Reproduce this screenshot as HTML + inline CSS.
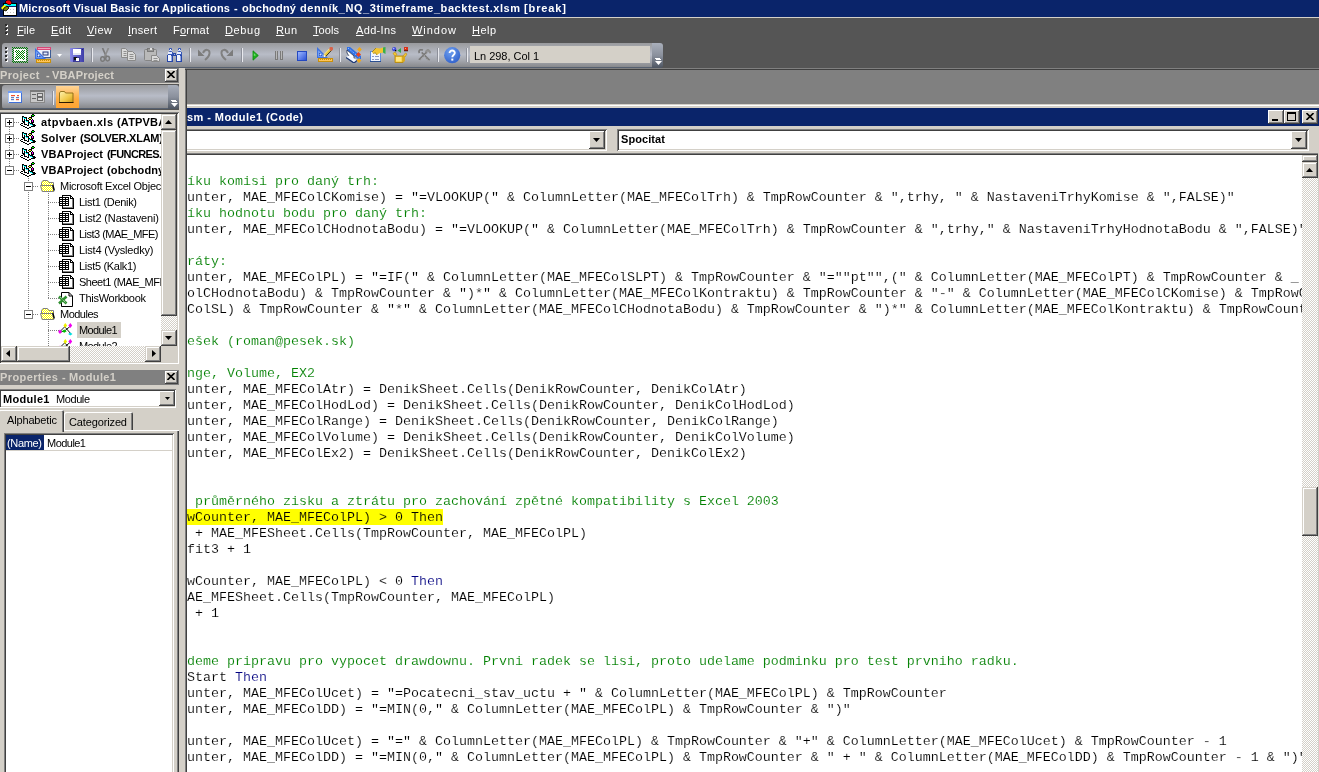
<!DOCTYPE html><html><head><meta charset="utf-8"><title>Microsoft Visual Basic for Applications</title><style>
html,body{margin:0;padding:0}
body{width:1319px;height:772px;overflow:hidden;position:relative;background:#D4D0C8;font:11px/16px 'Liberation Sans',sans-serif;color:#000}
div,span,svg,i,b{position:absolute;box-sizing:border-box}
.t,.code{will-change:transform}
.t{white-space:pre;line-height:16px;height:16px}
u{text-decoration:underline;text-underline-offset:1px}
.btn{background:#D4D0C8;box-shadow:inset -1px -1px #404040,inset 1px 1px #fff,inset -2px -2px #808080,inset 2px 2px #D4D0C8}
.sbtn{background:#D4D0C8;box-shadow:inset -1px -1px #404040,inset 1px 1px #D4D0C8,inset -2px -2px #808080,inset 2px 2px #fff}
.sunk{background:#fff;box-shadow:inset 1px 1px #808080,inset -1px -1px #fff,inset 2px 2px #404040,inset -2px -2px #D4D0C8}
.trk{background:repeating-conic-gradient(#fff 0 25%,#D4D0C8 0 50%) 0 0/2px 2px}
.tb{background:linear-gradient(#999a9d 0%,#b8bcc7 45%,#a4a7ae 70%,#88898c 96%,#566070 97%);border-radius:3px 0 0 3px}
.ov{background:linear-gradient(#a9afbb 0%,#8a909c 50%,#4d5562 100%);border-radius:0 3px 3px 0}
.sep{width:1px;background:#e8e9ee;box-shadow:-1px 0 #8d909a}
.code{font:13.333px/16px 'Liberation Mono',monospace;white-space:pre;left:187px;height:16px;color:#000;-webkit-text-stroke:0.13px #fff}
.hl{-webkit-text-stroke-color:#ff0}
.g{color:#008000;position:static}.k{color:#000080;position:static}
.tr{left:0;height:16px;width:161px}
.dotv{width:1px;background:repeating-linear-gradient(#808080 0 1px,transparent 1px 2px)}
.doth{height:1px;background:repeating-linear-gradient(90deg,#808080 0 1px,transparent 1px 2px)}
.pm{width:9px;height:9px;border:1px solid #808080;background:#fff}
.pm:before{content:'';position:absolute;left:1px;top:3px;width:5px;height:1px;background:#000}
.pl:after{content:'';position:absolute;left:3px;top:1px;width:1px;height:5px;background:#000}
</style></head><body><div style="left:0;top:0;width:1319px;height:17px;background:#0A246A"></div><svg style="left:0px;top:0px" width="18" height="17" viewBox="0 0 18 17" ><rect x="3" y="3" width="14" height="13" fill="#000" /><rect x="4" y="4" width="12" height="2" fill="#00FFFF" /><rect x="4" y="6" width="12" height="1" fill="#0A246A" /><rect x="4" y="7" width="12" height="8" fill="#fff" /><rect x="10" y="9" width="1" height="1" fill="#C0C0C0" /><rect x="13" y="9" width="1" height="1" fill="#C0C0C0" /><rect x="7" y="12" width="1" height="1" fill="#C0C0C0" /><rect x="10" y="12" width="1" height="1" fill="#C0C0C0" /><rect x="13" y="12" width="1" height="1" fill="#C0C0C0" /><polygon points="7,0 10,0 12,3 10,5 7,4 5,2" fill="#FF0000" stroke="#000" stroke-width="0.8"/><polygon points="1,8 4,5 7,6 3,10" fill="#FFFF00"/><polygon points="4,8 7,6 9,8 6,11 3,10" fill="#808000" stroke="#000" stroke-width="0.8"/></svg><span class=t style="left:19px;top:0px;font-weight:bold;color:#fff;letter-spacing:0.196px;">Microsoft Visual Basic for Applications</span><span class=t style="left:234px;top:0px;font-weight:bold;color:#fff;">-</span><span class=t style="left:242px;top:0px;font-weight:bold;color:#fff;letter-spacing:0.205px;">obchodný</span><span class=t style="left:300px;top:0px;font-weight:bold;color:#fff;letter-spacing:0.553px;">denník_NQ_3timeframe_backtest.xlsm</span><span class=t style="left:524px;top:0px;font-weight:bold;color:#fff;letter-spacing:0.885px;">[break]</span><div style="left:0;top:17px;width:1319px;height:1px;background:#D4D0C8"></div><div style="left:0;top:18px;width:1319px;height:50px;background:#555"></div><span class=t style="left:17px;top:22px;color:#fff;letter-spacing:0.089px;"><u>F</u>ile</span><span class=t style="left:51px;top:22px;color:#fff;letter-spacing:0.344px;"><u>E</u>dit</span><span class=t style="left:87px;top:22px;color:#fff;letter-spacing:0.448px;"><u>V</u>iew</span><span class=t style="left:128px;top:22px;color:#fff;letter-spacing:0.297px;"><u>I</u>nsert</span><span class=t style="left:173px;top:22px;color:#fff;letter-spacing:0.231px;">F<u>o</u>rmat</span><span class=t style="left:225px;top:22px;color:#fff;letter-spacing:0.645px;"><u>D</u>ebug</span><span class=t style="left:276px;top:22px;color:#fff;letter-spacing:0.406px;"><u>R</u>un</span><span class=t style="left:313px;top:22px;color:#fff;letter-spacing:0.078px;"><u>T</u>ools</span><span class=t style="left:356px;top:22px;color:#fff;letter-spacing:0.346px;"><u>A</u>dd-Ins</span><span class=t style="left:412px;top:22px;color:#fff;letter-spacing:0.975px;"><u>W</u>indow</span><span class=t style="left:472px;top:22px;color:#fff;letter-spacing:0.458px;"><u>H</u>elp</span><div class=tb style="left:2px;top:43px;width:650px;height:25px"></div><div class=ov style="left:652px;top:43px;width:11px;height:25px"></div><div style="left:470px;top:46px;width:180px;height:17px;background:#D4D0C8"></div><span class=t style="left:474px;top:48px;letter-spacing:-0.036px;">Ln 298, Col 1</span><div class=sep style="left:92px;top:48px;height:14px"></div><div class=sep style="left:190px;top:48px;height:14px"></div><div class=sep style="left:242px;top:48px;height:14px"></div><div class=sep style="left:340px;top:48px;height:14px"></div><div class=sep style="left:438px;top:48px;height:14px"></div><div class=sep style="left:467px;top:48px;height:14px"></div><svg style="left:5px;top:24px" width="3" height="12" viewBox="0 0 3 12" shape-rendering="crispEdges"><rect x="1" y="1" width="2" height="2" fill="#fff" /><rect x="0" y="0" width="2" height="2" fill="#2e2e2e" /><rect x="1" y="5" width="2" height="2" fill="#fff" /><rect x="0" y="4" width="2" height="2" fill="#2e2e2e" /><rect x="1" y="9" width="2" height="2" fill="#fff" /><rect x="0" y="8" width="2" height="2" fill="#2e2e2e" /></svg><svg style="left:5px;top:47px" width="3" height="16" viewBox="0 0 3 16" shape-rendering="crispEdges"><rect x="1" y="1" width="2" height="2" fill="#fff" /><rect x="0" y="0" width="2" height="2" fill="#2e2e2e" /><rect x="1" y="5" width="2" height="2" fill="#fff" /><rect x="0" y="4" width="2" height="2" fill="#2e2e2e" /><rect x="1" y="9" width="2" height="2" fill="#fff" /><rect x="0" y="8" width="2" height="2" fill="#2e2e2e" /><rect x="1" y="13" width="2" height="2" fill="#fff" /><rect x="0" y="12" width="2" height="2" fill="#2e2e2e" /></svg><svg style="left:12px;top:47px" width="16" height="16" viewBox="0 0 16 16" shape-rendering="crispEdges"><rect x="0" y="0" width="1" height="1" fill="#008000"/><rect x="2" y="0" width="1" height="1" fill="#008000"/><rect x="4" y="0" width="1" height="1" fill="#008000"/><rect x="6" y="0" width="1" height="1" fill="#008000"/><rect x="8" y="0" width="1" height="1" fill="#008000"/><rect x="10" y="0" width="1" height="1" fill="#008000"/><rect x="12" y="0" width="1" height="1" fill="#008000"/><rect x="14" y="0" width="1" height="1" fill="#008000"/><rect x="1" y="1" width="1" height="1" fill="#008000"/><rect x="3" y="1" width="1" height="1" fill="#008000"/><rect x="5" y="1" width="1" height="1" fill="#008000"/><rect x="7" y="1" width="1" height="1" fill="#008000"/><rect x="9" y="1" width="1" height="1" fill="#008000"/><rect x="11" y="1" width="1" height="1" fill="#008000"/><rect x="13" y="1" width="1" height="1" fill="#008000"/><rect x="15" y="1" width="1" height="1" fill="#008000"/><rect x="0" y="2" width="1" height="1" fill="#008000"/><rect x="2" y="2" width="12" height="1" fill="#fff"/><rect x="14" y="2" width="1" height="1" fill="#008000"/><rect x="1" y="3" width="1" height="1" fill="#008000"/><rect x="2" y="3" width="2" height="1" fill="#fff"/><rect x="4" y="3" width="1" height="1" fill="#008000"/><rect x="5" y="3" width="1" height="1" fill="#fff"/><rect x="6" y="3" width="1" height="1" fill="#008000"/><rect x="7" y="3" width="3" height="1" fill="#fff"/><rect x="10" y="3" width="1" height="1" fill="#008000"/><rect x="11" y="3" width="1" height="1" fill="#fff"/><rect x="12" y="3" width="1" height="1" fill="#008000"/><rect x="13" y="3" width="1" height="1" fill="#fff"/><rect x="15" y="3" width="1" height="1" fill="#008000"/><rect x="0" y="4" width="1" height="1" fill="#008000"/><rect x="2" y="4" width="1" height="1" fill="#fff"/><rect x="3" y="4" width="1" height="1" fill="#008000"/><rect x="4" y="4" width="1" height="1" fill="#fff"/><rect x="5" y="4" width="1" height="1" fill="#008000"/><rect x="6" y="4" width="1" height="1" fill="#fff"/><rect x="7" y="4" width="1" height="1" fill="#008000"/><rect x="8" y="4" width="1" height="1" fill="#fff"/><rect x="9" y="4" width="1" height="1" fill="#008000"/><rect x="10" y="4" width="1" height="1" fill="#fff"/><rect x="11" y="4" width="1" height="1" fill="#008000"/><rect x="12" y="4" width="2" height="1" fill="#fff"/><rect x="14" y="4" width="1" height="1" fill="#008000"/><rect x="1" y="5" width="1" height="1" fill="#008000"/><rect x="2" y="5" width="2" height="1" fill="#fff"/><rect x="4" y="5" width="1" height="1" fill="#008000"/><rect x="5" y="5" width="1" height="1" fill="#fff"/><rect x="6" y="5" width="1" height="1" fill="#008000"/><rect x="7" y="5" width="1" height="1" fill="#fff"/><rect x="8" y="5" width="1" height="1" fill="#008000"/><rect x="9" y="5" width="1" height="1" fill="#fff"/><rect x="10" y="5" width="1" height="1" fill="#008000"/><rect x="11" y="5" width="1" height="1" fill="#fff"/><rect x="12" y="5" width="1" height="1" fill="#008000"/><rect x="13" y="5" width="1" height="1" fill="#fff"/><rect x="15" y="5" width="1" height="1" fill="#008000"/><rect x="0" y="6" width="1" height="1" fill="#008000"/><rect x="2" y="6" width="3" height="1" fill="#fff"/><rect x="5" y="6" width="1" height="1" fill="#008000"/><rect x="6" y="6" width="1" height="1" fill="#fff"/><rect x="7" y="6" width="1" height="1" fill="#008000"/><rect x="8" y="6" width="1" height="1" fill="#fff"/><rect x="9" y="6" width="1" height="1" fill="#008000"/><rect x="10" y="6" width="1" height="1" fill="#fff"/><rect x="11" y="6" width="1" height="1" fill="#008000"/><rect x="12" y="6" width="2" height="1" fill="#fff"/><rect x="14" y="6" width="1" height="1" fill="#008000"/><rect x="1" y="7" width="1" height="1" fill="#008000"/><rect x="2" y="7" width="2" height="1" fill="#fff"/><rect x="4" y="7" width="1" height="1" fill="#008000"/><rect x="5" y="7" width="1" height="1" fill="#fff"/><rect x="6" y="7" width="1" height="1" fill="#008000"/><rect x="7" y="7" width="1" height="1" fill="#fff"/><rect x="8" y="7" width="1" height="1" fill="#008000"/><rect x="9" y="7" width="1" height="1" fill="#fff"/><rect x="10" y="7" width="1" height="1" fill="#008000"/><rect x="11" y="7" width="3" height="1" fill="#fff"/><rect x="15" y="7" width="1" height="1" fill="#008000"/><rect x="0" y="8" width="1" height="1" fill="#008000"/><rect x="2" y="8" width="3" height="1" fill="#fff"/><rect x="5" y="8" width="1" height="1" fill="#008000"/><rect x="6" y="8" width="1" height="1" fill="#fff"/><rect x="7" y="8" width="1" height="1" fill="#008000"/><rect x="8" y="8" width="1" height="1" fill="#fff"/><rect x="9" y="8" width="1" height="1" fill="#008000"/><rect x="10" y="8" width="1" height="1" fill="#fff"/><rect x="11" y="8" width="1" height="1" fill="#008000"/><rect x="12" y="8" width="2" height="1" fill="#fff"/><rect x="14" y="8" width="1" height="1" fill="#008000"/><rect x="1" y="9" width="1" height="1" fill="#008000"/><rect x="2" y="9" width="2" height="1" fill="#fff"/><rect x="4" y="9" width="1" height="1" fill="#008000"/><rect x="5" y="9" width="1" height="1" fill="#fff"/><rect x="6" y="9" width="1" height="1" fill="#008000"/><rect x="7" y="9" width="1" height="1" fill="#fff"/><rect x="8" y="9" width="1" height="1" fill="#008000"/><rect x="9" y="9" width="1" height="1" fill="#fff"/><rect x="10" y="9" width="1" height="1" fill="#008000"/><rect x="11" y="9" width="1" height="1" fill="#fff"/><rect x="12" y="9" width="1" height="1" fill="#008000"/><rect x="13" y="9" width="1" height="1" fill="#fff"/><rect x="15" y="9" width="1" height="1" fill="#008000"/><rect x="0" y="10" width="1" height="1" fill="#008000"/><rect x="2" y="10" width="1" height="1" fill="#fff"/><rect x="3" y="10" width="1" height="1" fill="#008000"/><rect x="4" y="10" width="1" height="1" fill="#fff"/><rect x="5" y="10" width="1" height="1" fill="#008000"/><rect x="6" y="10" width="1" height="1" fill="#fff"/><rect x="7" y="10" width="1" height="1" fill="#008000"/><rect x="8" y="10" width="1" height="1" fill="#fff"/><rect x="9" y="10" width="1" height="1" fill="#008000"/><rect x="10" y="10" width="1" height="1" fill="#fff"/><rect x="11" y="10" width="1" height="1" fill="#008000"/><rect x="12" y="10" width="2" height="1" fill="#fff"/><rect x="14" y="10" width="1" height="1" fill="#008000"/><rect x="1" y="11" width="1" height="1" fill="#008000"/><rect x="2" y="11" width="2" height="1" fill="#fff"/><rect x="4" y="11" width="1" height="1" fill="#008000"/><rect x="5" y="11" width="1" height="1" fill="#fff"/><rect x="6" y="11" width="1" height="1" fill="#008000"/><rect x="7" y="11" width="1" height="1" fill="#fff"/><rect x="8" y="11" width="1" height="1" fill="#008000"/><rect x="9" y="11" width="1" height="1" fill="#fff"/><rect x="10" y="11" width="1" height="1" fill="#008000"/><rect x="11" y="11" width="1" height="1" fill="#fff"/><rect x="12" y="11" width="1" height="1" fill="#008000"/><rect x="13" y="11" width="1" height="1" fill="#fff"/><rect x="15" y="11" width="1" height="1" fill="#008000"/><rect x="0" y="12" width="1" height="1" fill="#008000"/><rect x="2" y="12" width="1" height="1" fill="#fff"/><rect x="3" y="12" width="1" height="1" fill="#008000"/><rect x="4" y="12" width="1" height="1" fill="#fff"/><rect x="5" y="12" width="1" height="1" fill="#008000"/><rect x="6" y="12" width="5" height="1" fill="#fff"/><rect x="11" y="12" width="1" height="1" fill="#008000"/><rect x="12" y="12" width="2" height="1" fill="#fff"/><rect x="14" y="12" width="1" height="1" fill="#008000"/><rect x="1" y="13" width="1" height="1" fill="#008000"/><rect x="2" y="13" width="12" height="1" fill="#fff"/><rect x="15" y="13" width="1" height="1" fill="#008000"/><rect x="0" y="14" width="1" height="1" fill="#008000"/><rect x="2" y="14" width="1" height="1" fill="#008000"/><rect x="4" y="14" width="1" height="1" fill="#008000"/><rect x="6" y="14" width="1" height="1" fill="#008000"/><rect x="8" y="14" width="1" height="1" fill="#008000"/><rect x="10" y="14" width="1" height="1" fill="#008000"/><rect x="12" y="14" width="1" height="1" fill="#008000"/><rect x="14" y="14" width="1" height="1" fill="#008000"/><rect x="1" y="15" width="1" height="1" fill="#008000"/><rect x="3" y="15" width="1" height="1" fill="#008000"/><rect x="5" y="15" width="1" height="1" fill="#008000"/><rect x="7" y="15" width="1" height="1" fill="#008000"/><rect x="9" y="15" width="1" height="1" fill="#008000"/><rect x="11" y="15" width="1" height="1" fill="#008000"/><rect x="13" y="15" width="1" height="1" fill="#008000"/><rect x="15" y="15" width="1" height="1" fill="#008000"/></svg><svg style="left:35px;top:47px" width="16" height="16" viewBox="0 0 16 16" ><rect x="2" y="0" width="14" height="3" fill="#D64877" /><rect x="3" y="1" width="12" height="1" fill="#F2A0BC" /><rect x="2" y="3" width="14" height="8" fill="#EEF3FD" /><rect x="15" y="3" width="1" height="8" fill="#3D5C94" /><rect x="2" y="10" width="14" height="1" fill="#3D5C94" /><rect x="8" y="5" width="5" height="3" fill="#E6ECFA" stroke="#26397A" stroke-width="1"/><polygon points="0,1 0,12 11,12" fill="#3F73E0"/><polygon points="1.2,4 1.2,10.8 8,10.8" fill="#7FA8F5"/><polygon points="2,6 2,10 6,10" fill="#2750C0"/><circle cx="3.5" cy="8.5" r="0.9" fill="#fff"/><rect x="1" y="12" width="15" height="4" fill="#C8900C" /><rect x="2" y="13" width="13" height="2" fill="#FFC55A" /><rect x="3" y="13" width="1" height="1" fill="#C8900C" /><rect x="5" y="13" width="1" height="1" fill="#C8900C" /><rect x="7" y="13" width="1" height="1" fill="#C8900C" /><rect x="9" y="13" width="1" height="1" fill="#C8900C" /><rect x="11" y="13" width="1" height="1" fill="#C8900C" /><rect x="13" y="13" width="1" height="1" fill="#C8900C" /></svg><svg style="left:57px;top:54px" width="5" height="3" viewBox="0 0 5 3" ><polygon points="0,0 5,0 2.5,3" fill="#fff"/></svg><svg style="left:70px;top:48px" width="14" height="14" viewBox="0 0 14 14" ><defs><linearGradient id="sv" x1="0" x2="1"><stop offset="0" stop-color="#8A8AE8"/><stop offset="1" stop-color="#3C3CA8"/></linearGradient></defs><path d="M0,0 H14 V14 H1 L0,13 Z" fill="url(#sv)"/><rect x="3" y="1" width="8" height="6" fill="#fff" /><rect x="3" y="5" width="8" height="2" fill="#E4E8F4" /><rect x="12" y="1" width="1" height="1" fill="#222266" /><rect x="3" y="9" width="7" height="5" fill="#3A3A98" /><rect x="4" y="9" width="3" height="3" fill="#111" /><rect x="6" y="10" width="3" height="3" fill="#fff" /><rect x="4" y="10" width="2" height="2" fill="#111" /></svg><svg style="left:100px;top:48px" width="11" height="14" viewBox="0 0 11 14" ><g fill="none" stroke="#7a7a7a"><path d="M2.5,0 L6.5,9" stroke-width="1.7"/><path d="M8.5,0 L4.5,9" stroke-width="1.7" stroke="#8c8c8c"/><ellipse cx="2.6" cy="11" rx="1.9" ry="2.3" stroke-width="1.5"/><ellipse cx="7.6" cy="10.6" rx="1.9" ry="2.3" stroke-width="1.5"/></g></svg><svg style="left:121px;top:48px" width="16" height="14" viewBox="0 0 16 14" ><path d="M0.5,0.5 H4.5 L7.5,3.5 V9.5 H0.5 Z" fill="#DADADA" stroke="#8a8a8a" stroke-width="1"/><rect x="2.5" y="3.0" width="3" height="1" fill="#8f8f8f" /><rect x="2.5" y="5.0" width="3" height="1" fill="#8f8f8f" /><rect x="2.5" y="7.0" width="3" height="1" fill="#8f8f8f" /><path d="M6.5,3.5 H11.5 L14.5,6.5 V12.5 H6.5 Z" fill="#DADADA" stroke="#8a8a8a" stroke-width="1"/><rect x="8.5" y="6.0" width="4" height="1" fill="#8f8f8f" /><rect x="8.5" y="8.0" width="4" height="1" fill="#8f8f8f" /><rect x="8.5" y="10.0" width="4" height="1" fill="#8f8f8f" /></svg><svg style="left:144px;top:48px" width="17" height="15" viewBox="0 0 17 15" ><rect x="0.5" y="1.5" width="12" height="11" fill="#B9B9B9" stroke="#858585" stroke-width="1" rx="1"/><rect x="3.5" y="0.5" width="6" height="3" fill="#9a9a9a" stroke="#7a7a7a" stroke-width="1"/><rect x="6" y="0" width="2" height="2" fill="#e0e0e0" /><path d="M7.5,7.5 H12.5 L15.5,10.5 V13.5 H7.5 Z" fill="#DADADA" stroke="#8a8a8a" stroke-width="1"/><rect x="9.5" y="10.0" width="4" height="1" fill="#8f8f8f" /><rect x="9.5" y="12.0" width="4" height="1" fill="#8f8f8f" /></svg><svg style="left:167px;top:48px" width="15" height="14" viewBox="0 0 15 14" ><rect x="2" y="0" width="3" height="4" fill="#3557B8" rx="1"/><rect x="3" y="1" width="1" height="1" fill="#fff" /><rect x="2" y="2" width="3" height="1" fill="#C8D4F8" /><rect x="1" y="4" width="5" height="3" fill="#3557B8" /><rect x="1" y="4" width="4" height="2" fill="#E4EBFF" /><rect x="0" y="7" width="6" height="7" fill="#2747A8" /><rect x="1" y="7" width="3" height="6" fill="#F0F4FF" /><rect x="4" y="8" width="1" height="5" fill="#8FA6E8" /><rect x="11" y="0" width="3" height="4" fill="#3557B8" rx="1"/><rect x="12" y="1" width="1" height="1" fill="#fff" /><rect x="11" y="2" width="3" height="1" fill="#C8D4F8" /><rect x="10" y="4" width="5" height="3" fill="#3557B8" /><rect x="10" y="4" width="4" height="2" fill="#E4EBFF" /><rect x="9" y="7" width="6" height="7" fill="#2747A8" /><rect x="10" y="7" width="3" height="6" fill="#F0F4FF" /><rect x="13" y="8" width="1" height="5" fill="#8FA6E8" /><rect x="6" y="5" width="3" height="3" fill="#2747A8" /><rect x="7" y="6" width="1" height="1" fill="#9FB4F0" /></svg><svg style="left:198px;top:48px" width="13" height="13" viewBox="0 0 13 13" ><g ><polygon points="0,1.5 0,8 6.5,8" fill="#7c7c7c"/><path d="M5,5 C7,0.5 12,1 11.5,5.5 C11.2,8.5 9,10.5 7,12" fill="none" stroke="#808080" stroke-width="2"/></g></svg><svg style="left:220px;top:48px" width="13" height="13" viewBox="0 0 13 13" ><g transform="translate(13,0) scale(-1,1)"><polygon points="0,1.5 0,8 6.5,8" fill="#7c7c7c"/><path d="M5,5 C7,0.5 12,1 11.5,5.5 C11.2,8.5 9,10.5 7,12" fill="none" stroke="#808080" stroke-width="2"/></g></svg><svg style="left:252px;top:50px" width="7" height="11" viewBox="0 0 7 11" ><polygon points="1,0.8 1,10.2 6.3,5.5" fill="#1DB01D" stroke="#0B8A0B" stroke-width="0.8"/><polygon points="1.8,3 1.8,6 4,5.2" fill="#6FE06F"/></svg><svg style="left:275px;top:51px" width="8" height="9" viewBox="0 0 8 9" ><rect x="0" y="0" width="3" height="9" fill="#7a7a7a" /><rect x="1" y="0" width="1" height="8" fill="#b8b8b8" /><rect x="5" y="0" width="3" height="9" fill="#7a7a7a" /><rect x="6" y="0" width="1" height="8" fill="#b8b8b8" /></svg><svg style="left:297px;top:51px" width="10" height="10" viewBox="0 0 10 10" ><defs><linearGradient id="st" x1="0" y1="0" x2="1" y2="1"><stop offset="0" stop-color="#9DB7FF"/><stop offset="1" stop-color="#2C52D8"/></linearGradient></defs><rect x="0" y="0" width="10" height="10" fill="#2448C0" /><rect x="1" y="1" width="8" height="8" fill="url(#st)" /></svg><svg style="left:317px;top:47px" width="16" height="16" viewBox="0 0 16 16" ><polygon points="0,0 0,11 11,11" fill="#3F73E0"/><polygon points="1.2,3.2 1.2,9.8 7.8,9.8" fill="#7FA8F5"/><polygon points="2,5.5 2,9 5.5,9" fill="#2750C0"/><circle cx="3.3" cy="7.8" r="0.8" fill="#fff"/><path d="M14,2 L7.5,9" stroke="#E8C840" stroke-width="3"/><path d="M14.6,3.2 L8.6,9.6" stroke="#222" stroke-width="0.9"/><path d="M13,1.2 L7,7.6" stroke="#FFF0A0" stroke-width="0.8"/><circle cx="14.2" cy="1.8" r="1.9" fill="#D8634A"/><polygon points="6,10.5 7,7.8 8.8,9.6" fill="#fff"/><polygon points="6,10.5 6.5,9.4 7.2,10" fill="#000"/><rect x="1" y="11" width="15" height="4" fill="#C8900C" /><rect x="2" y="12" width="13" height="2" fill="#FFC55A" /><rect x="3" y="12" width="1" height="1" fill="#C8900C" /><rect x="5" y="12" width="1" height="1" fill="#C8900C" /><rect x="7" y="12" width="1" height="1" fill="#C8900C" /><rect x="9" y="12" width="1" height="1" fill="#C8900C" /><rect x="11" y="12" width="1" height="1" fill="#C8900C" /><rect x="13" y="12" width="1" height="1" fill="#C8900C" /></svg><svg style="left:346px;top:47px" width="16" height="16" viewBox="0 0 16 16" ><polygon points="1,0 4,0 15,9 15,12 12,12 1,3" fill="#2F6FE4"/><path d="M2,1 L14,11" stroke="#9CC4FF" stroke-width="1" stroke-dasharray="1.5,1.5"/><polygon points="1,3 8,9 8,12 5,12 1,6" fill="#fff" stroke="#1c2c50" stroke-width="0.8"/><polygon points="0,10 3,8.5 11,13 8,15.5" fill="#F4F8FF"/><path d="M0,10.5 L8,16 L11,13.5" fill="none" stroke="#1E3A78" stroke-width="1.3"/><polygon points="13.5,0 15.8,2.5 13.5,5 11.2,2.5" fill="#F0A818"/><polygon points="12.5,5 15,7.5 12.5,10 10,7.5" fill="#E8421C"/><polygon points="13,11 15.3,13.5 13,16 10.7,13.5" fill="#F0A818"/></svg><svg style="left:370px;top:47px" width="16" height="16" viewBox="0 0 16 16" ><rect x="0.5" y="4.5" width="10" height="10" fill="#F2F6FE" stroke="#5C8CDA" stroke-width="1"/><rect x="0" y="14" width="11" height="1" fill="#2B4F90" /><rect x="2" y="9" width="2" height="1" fill="#8A98C0" /><rect x="5" y="9" width="4" height="1" fill="#8A98C0" /><rect x="2" y="12" width="2" height="1" fill="#8A98C0" /><rect x="5" y="12" width="4" height="1" fill="#8A98C0" /><polygon points="2,5 6,1 10,1.5 13,0.5 13,5.5 9,6.5 7,8 5,5.5 3.5,7" fill="#F2C430"/><path d="M2,5 L6,1 M3.5,7 L5,5.5 L7,8" stroke="#9a7a10" stroke-width="0.8" fill="none"/><polygon points="13,0.5 15.5,0 15.5,7 13,5.5" fill="#38B048"/></svg><svg style="left:392px;top:47px" width="17" height="16" viewBox="0 0 17 16" ><circle cx="2.2" cy="2.2" r="2.1" fill="#3C48D8"/><circle cx="1.7" cy="1.6" r="0.8" fill="#B0B8FF"/><rect x="3" y="3" width="1.3" height="1.3" fill="#000"/><polygon points="9,1 9,6 5.5,3.5" fill="#32A846"/><rect x="12" y="0" width="4" height="4" fill="#D83018" /><rect x="13" y="1" width="1" height="1" fill="#FF9C80" /><rect x="12" y="3.4" width="4" height="0.8" fill="#300" /><polygon points="3,9 11,9 11,15.5 3,15.5" fill="#F4C832" stroke="#B88A10" stroke-width="0.9"/><polygon points="4,10 9.5,10 9.5,14.5 4,14.5" fill="#FFE680"/><polygon points="3,9 1,6.5 3,5 5,7.5" fill="#F4C832" stroke="#B88A10" stroke-width="0.6"/><polygon points="11,9 13.5,6 15,7 13,10" fill="#F4C832" stroke="#B88A10" stroke-width="0.6"/><polygon points="11,9 13,10 13,14 11,15.5" fill="#D8A820"/></svg><svg style="left:418px;top:49px" width="13" height="12" viewBox="0 0 13 12" ><g fill="none" stroke="#7a7a7a"><path d="M1,11 L9,3" stroke-width="2"/><path d="M3.5,3.5 L11.5,11.5" stroke-width="2"/><path d="M1.5,11.5 L9.5,3.5" stroke-width="0.7" stroke="#d0d0d0" stroke-dasharray="1,1"/><path d="M3.2,4 L11,11.8" stroke-width="0.7" stroke="#d0d0d0" stroke-dasharray="1,1"/><path d="M1.5,4 C0,1.5 2.5,-0.3 4.8,1.2" stroke-width="1.7"/><path d="M7.5,3 L10,0.8 L12.8,4" stroke-width="2.2" stroke="#909090"/></g></svg><svg style="left:444px;top:47px" width="17" height="17" viewBox="0 0 17 17" ><defs><radialGradient id="hp" cx="0.4" cy="0.3" r="0.8"><stop offset="0" stop-color="#6FA0F0"/><stop offset="1" stop-color="#2C5CC8"/></radialGradient></defs><circle cx="8.2" cy="8.2" r="8.1" fill="url(#hp)"/><path d="M5.6,6 C5.6,2.6 11,2.8 10.8,6 C10.7,8 8.3,8 8.3,10.2" fill="none" stroke="#fff" stroke-width="1.9"/><rect x="7.3" y="11.6" width="2" height="2" fill="#fff"/></svg><svg style="left:655px;top:58px" width="8" height="8" viewBox="0 0 8 8" ><rect x="0" y="0" width="5" height="1" fill="#fff" /><rect x="1" y="1" width="5" height="1" fill="#fff" /><polygon points="0,3 7,3 3.5,7" fill="#fff"/></svg><div style="left:185px;top:68px;width:1134px;height:36px;background:#808080;box-shadow:inset 0 1px #808080,inset 1px 2px #404040"></div><div style="left:179px;top:68px;width:6px;height:704px;background:#D4D0C8"></div><div style="left:185px;top:70px;width:1px;height:702px;background:#808080"></div><div style="left:186px;top:70px;width:1px;height:702px;background:#404040"></div><div style="left:0;top:68px;width:179px;height:15px;background:#808080"></div><span class=t style="left:0px;top:67px;font-weight:bold;color:#D4D0C8;letter-spacing:0.367px;">Project</span><span class=t style="left:46px;top:67px;font-weight:bold;color:#D4D0C8;">-</span><span class=t style="left:52px;top:67px;font-weight:bold;color:#D4D0C8;letter-spacing:0.163px;">VBAProject</span><div class=btn style="left:165px;top:69px;width:13px;height:13px"></div><svg style="left:167px;top:71px" width="8" height="7"><path d="M0.5,0 L7.5,7 M7.5,0 L0.5,7" stroke="#000" stroke-width="1.6" fill="none"/></svg><div style="left:0;top:84px;width:179px;height:26px;background:#555"></div><div class=tb style="left:2px;top:85px;width:166px;height:24px"></div><div class=ov style="left:168px;top:85px;width:11px;height:24px"></div><div class=sep style="left:53px;top:91px;height:14px"></div><div style="left:56px;top:86px;width:23px;height:22px;background:linear-gradient(#ffd596,#ffab3f 60%,#ffa532)"></div><svg style="left:8px;top:91px" width="14" height="12" viewBox="0 0 14 12" ><rect x="0" y="0" width="14" height="12" fill="#3F6FD8" /><rect x="0" y="0" width="14" height="2" fill="#6F9CF4" /><rect x="1" y="2" width="12" height="9" fill="#fff" /><rect x="0" y="2" width="1" height="10" fill="#A8C4F8" /><rect x="3" y="4" width="4" height="1.2" fill="#F05030" /><rect x="9" y="4" width="2" height="1.2" fill="#F05030" /><rect x="3" y="6" width="3" height="1.2" fill="#6080C0" /><rect x="8" y="6" width="3" height="1.2" fill="#6080C0" /><rect x="3" y="8" width="3" height="1.2" fill="#6080C0" /><rect x="8" y="8" width="3" height="1.2" fill="#F05030" /></svg><svg style="left:30px;top:90px" width="15" height="13" viewBox="0 0 15 13" ><rect x="0" y="0" width="15" height="13" fill="#8a8a8a" /><rect x="1" y="2" width="13" height="10" fill="#c8c8c8" /><rect x="0" y="0" width="15" height="2" fill="#7a7a7a" /><rect x="2" y="4" width="4" height="1" fill="#666" /><rect x="2" y="8" width="4" height="1" fill="#666" /><rect x="7.5" y="3.5" width="5" height="3" fill="#d8d8d8" stroke="#6a6a6a" stroke-width="1"/><rect x="7.5" y="7.5" width="5" height="3" fill="#d8d8d8" stroke="#6a6a6a" stroke-width="1"/></svg><svg style="left:59px;top:91px" width="15" height="12" viewBox="0 0 15 12" ><defs><linearGradient id="fd" x1="0" y1="0" x2="1" y2="1"><stop offset="0" stop-color="#FFF2B0"/><stop offset="0.6" stop-color="#F0C848"/><stop offset="1" stop-color="#C89818"/></linearGradient></defs><path d="M0.5,2 L1.5,0.5 H5.5 L6.5,2 H14 V11.5 H0.5 Z" fill="url(#fd)" stroke="#8a6a14" stroke-width="0.9"/><rect x="0" y="11" width="14.5" height="1" fill="#2a1a00"/></svg><svg style="left:171px;top:100px" width="8" height="8" viewBox="0 0 8 8" ><rect x="0" y="0" width="5" height="1" fill="#fff" /><rect x="1" y="1" width="5" height="1" fill="#fff" /><polygon points="0,3 7,3 3.5,7" fill="#fff"/></svg><div class=sunk style="left:-1px;top:112px;width:180px;height:252px"></div><div style="left:1px;top:114px;width:160px;height:232px;overflow:hidden;background:#fff"><div class=dotv style="left:8px;top:13px;height:40px"></div><div class=dotv style="left:27px;top:62px;height:140px"></div><div class=dotv style="left:47px;top:77px;height:108px"></div><div class=dotv style="left:47px;top:205px;height:30px"></div><div class=doth style="left:13px;top:8px;width:6px"></div><div class="pm pl" style="left:4px;top:4px"></div><svg style="left:19px;top:0px" width="16" height="15" viewBox="0 0 16 15" shape-rendering="crispEdges"><rect x="12" y="0" width="2" height="1" fill="#000"/><rect x="11" y="1" width="1" height="1" fill="#000"/><rect x="12" y="1" width="2" height="1" fill="#00FF00"/><rect x="14" y="1" width="1" height="1" fill="#000"/><rect x="2" y="2" width="2" height="1" fill="#000"/><rect x="11" y="2" width="3" height="1" fill="#000"/><rect x="2" y="3" width="1" height="1" fill="#000"/><rect x="3" y="3" width="1" height="1" fill="#00FFFF"/><rect x="4" y="3" width="3" height="1" fill="#000"/><rect x="9" y="3" width="3" height="1" fill="#000"/><rect x="2" y="4" width="1" height="1" fill="#000"/><rect x="3" y="4" width="1" height="1" fill="#fff"/><rect x="4" y="4" width="2" height="1" fill="#00FFFF"/><rect x="6" y="4" width="1" height="1" fill="#000"/><rect x="8" y="4" width="1" height="1" fill="#000"/><rect x="9" y="4" width="2" height="1" fill="#FFFF00"/><rect x="11" y="4" width="1" height="1" fill="#000"/><rect x="2" y="5" width="1" height="1" fill="#000"/><rect x="3" y="5" width="1" height="1" fill="#fff"/><rect x="4" y="5" width="1" height="1" fill="#000"/><rect x="5" y="5" width="1" height="1" fill="#fff"/><rect x="6" y="5" width="1" height="1" fill="#000"/><rect x="9" y="5" width="2" height="1" fill="#000"/><rect x="12" y="5" width="1" height="1" fill="#000"/><rect x="2" y="6" width="1" height="1" fill="#000"/><rect x="3" y="6" width="1" height="1" fill="#fff"/><rect x="4" y="6" width="1" height="1" fill="#000"/><rect x="5" y="6" width="1" height="1" fill="#00FFFF"/><rect x="6" y="6" width="3" height="1" fill="#000"/><rect x="11" y="6" width="1" height="1" fill="#000"/><rect x="12" y="6" width="1" height="1" fill="#FF00FF"/><rect x="13" y="6" width="1" height="1" fill="#000"/><rect x="2" y="7" width="3" height="1" fill="#000"/><rect x="5" y="7" width="1" height="1" fill="#fff"/><rect x="6" y="7" width="2" height="1" fill="#00FFFF"/><rect x="8" y="7" width="1" height="1" fill="#000"/><rect x="11" y="7" width="1" height="1" fill="#000"/><rect x="12" y="7" width="1" height="1" fill="#FF00FF"/><rect x="13" y="7" width="1" height="1" fill="#000"/><rect x="3" y="8" width="2" height="1" fill="#000"/><rect x="5" y="8" width="3" height="1" fill="#fff"/><rect x="8" y="8" width="2" height="1" fill="#000"/><rect x="11" y="8" width="3" height="1" fill="#000"/><rect x="1" y="9" width="2" height="1" fill="#000"/><rect x="4" y="9" width="1" height="1" fill="#000"/><rect x="5" y="9" width="3" height="1" fill="#fff"/><rect x="8" y="9" width="1" height="1" fill="#000"/><rect x="9" y="9" width="1" height="1" fill="#00FFFF"/><rect x="10" y="9" width="3" height="1" fill="#000"/><rect x="0" y="10" width="1" height="1" fill="#000"/><rect x="4" y="10" width="3" height="1" fill="#000"/><rect x="8" y="10" width="1" height="1" fill="#000"/><rect x="9" y="10" width="1" height="1" fill="#fff"/><rect x="10" y="10" width="2" height="1" fill="#00FFFF"/><rect x="12" y="10" width="3" height="1" fill="#000"/><rect x="1" y="11" width="2" height="1" fill="#000"/><rect x="7" y="11" width="2" height="1" fill="#000"/><rect x="9" y="11" width="3" height="1" fill="#fff"/><rect x="12" y="11" width="1" height="1" fill="#00FFFF"/><rect x="13" y="11" width="3" height="1" fill="#000"/><rect x="3" y="12" width="2" height="1" fill="#000"/><rect x="5" y="12" width="6" height="1" fill="#fff"/><rect x="11" y="12" width="4" height="1" fill="#000"/><rect x="5" y="13" width="2" height="1" fill="#000"/><rect x="7" y="13" width="2" height="1" fill="#fff"/><rect x="9" y="13" width="2" height="1" fill="#000"/><rect x="7" y="14" width="2" height="1" fill="#000"/></svg><span class=t style="left:40px;top:0px;font-weight:bold;letter-spacing:0.487px;">atpvbaen.xls</span><span class=t style="left:116px;top:0px;font-weight:bold;letter-spacing:0.172px;">(ATPVBAEN.XLA)</span><div class=doth style="left:13px;top:24px;width:6px"></div><div class="pm pl" style="left:4px;top:20px"></div><svg style="left:19px;top:16px" width="16" height="15" viewBox="0 0 16 15" shape-rendering="crispEdges"><rect x="12" y="0" width="2" height="1" fill="#000"/><rect x="11" y="1" width="1" height="1" fill="#000"/><rect x="12" y="1" width="2" height="1" fill="#00FF00"/><rect x="14" y="1" width="1" height="1" fill="#000"/><rect x="2" y="2" width="2" height="1" fill="#000"/><rect x="11" y="2" width="3" height="1" fill="#000"/><rect x="2" y="3" width="1" height="1" fill="#000"/><rect x="3" y="3" width="1" height="1" fill="#00FFFF"/><rect x="4" y="3" width="3" height="1" fill="#000"/><rect x="9" y="3" width="3" height="1" fill="#000"/><rect x="2" y="4" width="1" height="1" fill="#000"/><rect x="3" y="4" width="1" height="1" fill="#fff"/><rect x="4" y="4" width="2" height="1" fill="#00FFFF"/><rect x="6" y="4" width="1" height="1" fill="#000"/><rect x="8" y="4" width="1" height="1" fill="#000"/><rect x="9" y="4" width="2" height="1" fill="#FFFF00"/><rect x="11" y="4" width="1" height="1" fill="#000"/><rect x="2" y="5" width="1" height="1" fill="#000"/><rect x="3" y="5" width="1" height="1" fill="#fff"/><rect x="4" y="5" width="1" height="1" fill="#000"/><rect x="5" y="5" width="1" height="1" fill="#fff"/><rect x="6" y="5" width="1" height="1" fill="#000"/><rect x="9" y="5" width="2" height="1" fill="#000"/><rect x="12" y="5" width="1" height="1" fill="#000"/><rect x="2" y="6" width="1" height="1" fill="#000"/><rect x="3" y="6" width="1" height="1" fill="#fff"/><rect x="4" y="6" width="1" height="1" fill="#000"/><rect x="5" y="6" width="1" height="1" fill="#00FFFF"/><rect x="6" y="6" width="3" height="1" fill="#000"/><rect x="11" y="6" width="1" height="1" fill="#000"/><rect x="12" y="6" width="1" height="1" fill="#FF00FF"/><rect x="13" y="6" width="1" height="1" fill="#000"/><rect x="2" y="7" width="3" height="1" fill="#000"/><rect x="5" y="7" width="1" height="1" fill="#fff"/><rect x="6" y="7" width="2" height="1" fill="#00FFFF"/><rect x="8" y="7" width="1" height="1" fill="#000"/><rect x="11" y="7" width="1" height="1" fill="#000"/><rect x="12" y="7" width="1" height="1" fill="#FF00FF"/><rect x="13" y="7" width="1" height="1" fill="#000"/><rect x="3" y="8" width="2" height="1" fill="#000"/><rect x="5" y="8" width="3" height="1" fill="#fff"/><rect x="8" y="8" width="2" height="1" fill="#000"/><rect x="11" y="8" width="3" height="1" fill="#000"/><rect x="1" y="9" width="2" height="1" fill="#000"/><rect x="4" y="9" width="1" height="1" fill="#000"/><rect x="5" y="9" width="3" height="1" fill="#fff"/><rect x="8" y="9" width="1" height="1" fill="#000"/><rect x="9" y="9" width="1" height="1" fill="#00FFFF"/><rect x="10" y="9" width="3" height="1" fill="#000"/><rect x="0" y="10" width="1" height="1" fill="#000"/><rect x="4" y="10" width="3" height="1" fill="#000"/><rect x="8" y="10" width="1" height="1" fill="#000"/><rect x="9" y="10" width="1" height="1" fill="#fff"/><rect x="10" y="10" width="2" height="1" fill="#00FFFF"/><rect x="12" y="10" width="3" height="1" fill="#000"/><rect x="1" y="11" width="2" height="1" fill="#000"/><rect x="7" y="11" width="2" height="1" fill="#000"/><rect x="9" y="11" width="3" height="1" fill="#fff"/><rect x="12" y="11" width="1" height="1" fill="#00FFFF"/><rect x="13" y="11" width="3" height="1" fill="#000"/><rect x="3" y="12" width="2" height="1" fill="#000"/><rect x="5" y="12" width="6" height="1" fill="#fff"/><rect x="11" y="12" width="4" height="1" fill="#000"/><rect x="5" y="13" width="2" height="1" fill="#000"/><rect x="7" y="13" width="2" height="1" fill="#fff"/><rect x="9" y="13" width="2" height="1" fill="#000"/><rect x="7" y="14" width="2" height="1" fill="#000"/></svg><span class=t style="left:40px;top:16px;font-weight:bold;letter-spacing:0.272px;">Solver</span><span class=t style="left:79px;top:16px;font-weight:bold;letter-spacing:-0.254px;">(SOLVER.XLAM)</span><div class=doth style="left:13px;top:40px;width:6px"></div><div class="pm pl" style="left:4px;top:36px"></div><svg style="left:19px;top:32px" width="16" height="15" viewBox="0 0 16 15" shape-rendering="crispEdges"><rect x="12" y="0" width="2" height="1" fill="#000"/><rect x="11" y="1" width="1" height="1" fill="#000"/><rect x="12" y="1" width="2" height="1" fill="#00FF00"/><rect x="14" y="1" width="1" height="1" fill="#000"/><rect x="2" y="2" width="2" height="1" fill="#000"/><rect x="11" y="2" width="3" height="1" fill="#000"/><rect x="2" y="3" width="1" height="1" fill="#000"/><rect x="3" y="3" width="1" height="1" fill="#00FFFF"/><rect x="4" y="3" width="3" height="1" fill="#000"/><rect x="9" y="3" width="3" height="1" fill="#000"/><rect x="2" y="4" width="1" height="1" fill="#000"/><rect x="3" y="4" width="1" height="1" fill="#fff"/><rect x="4" y="4" width="2" height="1" fill="#00FFFF"/><rect x="6" y="4" width="1" height="1" fill="#000"/><rect x="8" y="4" width="1" height="1" fill="#000"/><rect x="9" y="4" width="2" height="1" fill="#FFFF00"/><rect x="11" y="4" width="1" height="1" fill="#000"/><rect x="2" y="5" width="1" height="1" fill="#000"/><rect x="3" y="5" width="1" height="1" fill="#fff"/><rect x="4" y="5" width="1" height="1" fill="#000"/><rect x="5" y="5" width="1" height="1" fill="#fff"/><rect x="6" y="5" width="1" height="1" fill="#000"/><rect x="9" y="5" width="2" height="1" fill="#000"/><rect x="12" y="5" width="1" height="1" fill="#000"/><rect x="2" y="6" width="1" height="1" fill="#000"/><rect x="3" y="6" width="1" height="1" fill="#fff"/><rect x="4" y="6" width="1" height="1" fill="#000"/><rect x="5" y="6" width="1" height="1" fill="#00FFFF"/><rect x="6" y="6" width="3" height="1" fill="#000"/><rect x="11" y="6" width="1" height="1" fill="#000"/><rect x="12" y="6" width="1" height="1" fill="#FF00FF"/><rect x="13" y="6" width="1" height="1" fill="#000"/><rect x="2" y="7" width="3" height="1" fill="#000"/><rect x="5" y="7" width="1" height="1" fill="#fff"/><rect x="6" y="7" width="2" height="1" fill="#00FFFF"/><rect x="8" y="7" width="1" height="1" fill="#000"/><rect x="11" y="7" width="1" height="1" fill="#000"/><rect x="12" y="7" width="1" height="1" fill="#FF00FF"/><rect x="13" y="7" width="1" height="1" fill="#000"/><rect x="3" y="8" width="2" height="1" fill="#000"/><rect x="5" y="8" width="3" height="1" fill="#fff"/><rect x="8" y="8" width="2" height="1" fill="#000"/><rect x="11" y="8" width="3" height="1" fill="#000"/><rect x="1" y="9" width="2" height="1" fill="#000"/><rect x="4" y="9" width="1" height="1" fill="#000"/><rect x="5" y="9" width="3" height="1" fill="#fff"/><rect x="8" y="9" width="1" height="1" fill="#000"/><rect x="9" y="9" width="1" height="1" fill="#00FFFF"/><rect x="10" y="9" width="3" height="1" fill="#000"/><rect x="0" y="10" width="1" height="1" fill="#000"/><rect x="4" y="10" width="3" height="1" fill="#000"/><rect x="8" y="10" width="1" height="1" fill="#000"/><rect x="9" y="10" width="1" height="1" fill="#fff"/><rect x="10" y="10" width="2" height="1" fill="#00FFFF"/><rect x="12" y="10" width="3" height="1" fill="#000"/><rect x="1" y="11" width="2" height="1" fill="#000"/><rect x="7" y="11" width="2" height="1" fill="#000"/><rect x="9" y="11" width="3" height="1" fill="#fff"/><rect x="12" y="11" width="1" height="1" fill="#00FFFF"/><rect x="13" y="11" width="3" height="1" fill="#000"/><rect x="3" y="12" width="2" height="1" fill="#000"/><rect x="5" y="12" width="6" height="1" fill="#fff"/><rect x="11" y="12" width="4" height="1" fill="#000"/><rect x="5" y="13" width="2" height="1" fill="#000"/><rect x="7" y="13" width="2" height="1" fill="#fff"/><rect x="9" y="13" width="2" height="1" fill="#000"/><rect x="7" y="14" width="2" height="1" fill="#000"/></svg><span class=t style="left:40px;top:32px;font-weight:bold;letter-spacing:0.163px;">VBAProject</span><span class=t style="left:106px;top:32px;font-weight:bold;letter-spacing:-0.592px;">(FUNCRES.XLAM)</span><div class=doth style="left:13px;top:56px;width:6px"></div><div class="pm" style="left:4px;top:52px"></div><svg style="left:19px;top:48px" width="16" height="15" viewBox="0 0 16 15" shape-rendering="crispEdges"><rect x="12" y="0" width="2" height="1" fill="#000"/><rect x="11" y="1" width="1" height="1" fill="#000"/><rect x="12" y="1" width="2" height="1" fill="#00FF00"/><rect x="14" y="1" width="1" height="1" fill="#000"/><rect x="2" y="2" width="2" height="1" fill="#000"/><rect x="11" y="2" width="3" height="1" fill="#000"/><rect x="2" y="3" width="1" height="1" fill="#000"/><rect x="3" y="3" width="1" height="1" fill="#00FFFF"/><rect x="4" y="3" width="3" height="1" fill="#000"/><rect x="9" y="3" width="3" height="1" fill="#000"/><rect x="2" y="4" width="1" height="1" fill="#000"/><rect x="3" y="4" width="1" height="1" fill="#fff"/><rect x="4" y="4" width="2" height="1" fill="#00FFFF"/><rect x="6" y="4" width="1" height="1" fill="#000"/><rect x="8" y="4" width="1" height="1" fill="#000"/><rect x="9" y="4" width="2" height="1" fill="#FFFF00"/><rect x="11" y="4" width="1" height="1" fill="#000"/><rect x="2" y="5" width="1" height="1" fill="#000"/><rect x="3" y="5" width="1" height="1" fill="#fff"/><rect x="4" y="5" width="1" height="1" fill="#000"/><rect x="5" y="5" width="1" height="1" fill="#fff"/><rect x="6" y="5" width="1" height="1" fill="#000"/><rect x="9" y="5" width="2" height="1" fill="#000"/><rect x="12" y="5" width="1" height="1" fill="#000"/><rect x="2" y="6" width="1" height="1" fill="#000"/><rect x="3" y="6" width="1" height="1" fill="#fff"/><rect x="4" y="6" width="1" height="1" fill="#000"/><rect x="5" y="6" width="1" height="1" fill="#00FFFF"/><rect x="6" y="6" width="3" height="1" fill="#000"/><rect x="11" y="6" width="1" height="1" fill="#000"/><rect x="12" y="6" width="1" height="1" fill="#FF00FF"/><rect x="13" y="6" width="1" height="1" fill="#000"/><rect x="2" y="7" width="3" height="1" fill="#000"/><rect x="5" y="7" width="1" height="1" fill="#fff"/><rect x="6" y="7" width="2" height="1" fill="#00FFFF"/><rect x="8" y="7" width="1" height="1" fill="#000"/><rect x="11" y="7" width="1" height="1" fill="#000"/><rect x="12" y="7" width="1" height="1" fill="#FF00FF"/><rect x="13" y="7" width="1" height="1" fill="#000"/><rect x="3" y="8" width="2" height="1" fill="#000"/><rect x="5" y="8" width="3" height="1" fill="#fff"/><rect x="8" y="8" width="2" height="1" fill="#000"/><rect x="11" y="8" width="3" height="1" fill="#000"/><rect x="1" y="9" width="2" height="1" fill="#000"/><rect x="4" y="9" width="1" height="1" fill="#000"/><rect x="5" y="9" width="3" height="1" fill="#fff"/><rect x="8" y="9" width="1" height="1" fill="#000"/><rect x="9" y="9" width="1" height="1" fill="#00FFFF"/><rect x="10" y="9" width="3" height="1" fill="#000"/><rect x="0" y="10" width="1" height="1" fill="#000"/><rect x="4" y="10" width="3" height="1" fill="#000"/><rect x="8" y="10" width="1" height="1" fill="#000"/><rect x="9" y="10" width="1" height="1" fill="#fff"/><rect x="10" y="10" width="2" height="1" fill="#00FFFF"/><rect x="12" y="10" width="3" height="1" fill="#000"/><rect x="1" y="11" width="2" height="1" fill="#000"/><rect x="7" y="11" width="2" height="1" fill="#000"/><rect x="9" y="11" width="3" height="1" fill="#fff"/><rect x="12" y="11" width="1" height="1" fill="#00FFFF"/><rect x="13" y="11" width="3" height="1" fill="#000"/><rect x="3" y="12" width="2" height="1" fill="#000"/><rect x="5" y="12" width="6" height="1" fill="#fff"/><rect x="11" y="12" width="4" height="1" fill="#000"/><rect x="5" y="13" width="2" height="1" fill="#000"/><rect x="7" y="13" width="2" height="1" fill="#fff"/><rect x="9" y="13" width="2" height="1" fill="#000"/><rect x="7" y="14" width="2" height="1" fill="#000"/></svg><span class=t style="left:40px;top:48px;font-weight:bold;letter-spacing:0.163px;">VBAProject</span><span class=t style="left:106px;top:48px;font-weight:bold;letter-spacing:0.127px;">(obchodný denník_NQ_3timeframe_backtest.xlsm)</span><div class=doth style="left:32px;top:72px;width:6px"></div><div class="pm" style="left:23px;top:68px"></div><svg style="left:39px;top:66px" width="16" height="13" viewBox="0 0 16 13" ><defs><pattern id="yd" width="2" height="2" patternUnits="userSpaceOnUse"><rect width="2" height="2" fill="#fff"/><rect width="1" height="1" fill="#FFFF00"/><rect x="1" y="1" width="1" height="1" fill="#FFFF00"/></pattern></defs><path d="M1.5,5 V2.5 L3,0.5 H7.5 L9,2.5 H13.5 V5.5" fill="url(#yd)" stroke="#808080" stroke-width="1"/><path d="M0.5,5.5 H12.5 L13.8,11.5 H2.2 Z" fill="url(#yd)" stroke="#808080" stroke-width="1"/><path d="M12.8,5 L14.3,10.5" stroke="#000" stroke-width="1.4"/></svg><span class=t style="left:59px;top:64px;letter-spacing:-0.256px;">Microsoft Excel Objects</span><div class=doth style="left:47px;top:88px;width:11px"></div><svg style="left:58px;top:81px" width="15" height="14" viewBox="0 0 15 14" shape-rendering="crispEdges"><rect x="3" y="0" width="9" height="1" fill="#000"/><rect x="3" y="1" width="1" height="1" fill="#000"/><rect x="4" y="1" width="7" height="1" fill="#fff"/><rect x="11" y="1" width="2" height="1" fill="#000"/><rect x="0" y="2" width="10" height="1" fill="#000"/><rect x="10" y="2" width="1" height="1" fill="#fff"/><rect x="11" y="2" width="1" height="1" fill="#000"/><rect x="12" y="2" width="1" height="1" fill="#fff"/><rect x="13" y="2" width="1" height="1" fill="#000"/><rect x="0" y="3" width="1" height="1" fill="#000"/><rect x="1" y="3" width="2" height="1" fill="#fff"/><rect x="3" y="3" width="1" height="1" fill="#000"/><rect x="4" y="3" width="2" height="1" fill="#fff"/><rect x="6" y="3" width="1" height="1" fill="#000"/><rect x="7" y="3" width="2" height="1" fill="#fff"/><rect x="9" y="3" width="1" height="1" fill="#000"/><rect x="10" y="3" width="1" height="1" fill="#fff"/><rect x="11" y="3" width="4" height="1" fill="#000"/><rect x="0" y="4" width="10" height="1" fill="#000"/><rect x="10" y="4" width="3" height="1" fill="#fff"/><rect x="13" y="4" width="1" height="1" fill="#808080"/><rect x="14" y="4" width="1" height="1" fill="#000"/><rect x="0" y="5" width="1" height="1" fill="#000"/><rect x="1" y="5" width="2" height="1" fill="#fff"/><rect x="3" y="5" width="1" height="1" fill="#000"/><rect x="4" y="5" width="2" height="1" fill="#fff"/><rect x="6" y="5" width="1" height="1" fill="#000"/><rect x="7" y="5" width="2" height="1" fill="#fff"/><rect x="9" y="5" width="1" height="1" fill="#000"/><rect x="10" y="5" width="3" height="1" fill="#fff"/><rect x="13" y="5" width="1" height="1" fill="#808080"/><rect x="14" y="5" width="1" height="1" fill="#000"/><rect x="0" y="6" width="10" height="1" fill="#000"/><rect x="10" y="6" width="3" height="1" fill="#fff"/><rect x="13" y="6" width="1" height="1" fill="#808080"/><rect x="14" y="6" width="1" height="1" fill="#000"/><rect x="0" y="7" width="1" height="1" fill="#000"/><rect x="1" y="7" width="2" height="1" fill="#fff"/><rect x="3" y="7" width="1" height="1" fill="#000"/><rect x="4" y="7" width="2" height="1" fill="#fff"/><rect x="6" y="7" width="1" height="1" fill="#000"/><rect x="7" y="7" width="2" height="1" fill="#fff"/><rect x="9" y="7" width="1" height="1" fill="#000"/><rect x="10" y="7" width="3" height="1" fill="#fff"/><rect x="13" y="7" width="1" height="1" fill="#808080"/><rect x="14" y="7" width="1" height="1" fill="#000"/><rect x="0" y="8" width="10" height="1" fill="#000"/><rect x="10" y="8" width="3" height="1" fill="#fff"/><rect x="13" y="8" width="1" height="1" fill="#808080"/><rect x="14" y="8" width="1" height="1" fill="#000"/><rect x="0" y="9" width="1" height="1" fill="#000"/><rect x="1" y="9" width="2" height="1" fill="#fff"/><rect x="3" y="9" width="1" height="1" fill="#000"/><rect x="4" y="9" width="2" height="1" fill="#fff"/><rect x="6" y="9" width="1" height="1" fill="#000"/><rect x="7" y="9" width="2" height="1" fill="#fff"/><rect x="9" y="9" width="1" height="1" fill="#000"/><rect x="10" y="9" width="3" height="1" fill="#fff"/><rect x="13" y="9" width="1" height="1" fill="#808080"/><rect x="14" y="9" width="1" height="1" fill="#000"/><rect x="0" y="10" width="10" height="1" fill="#000"/><rect x="10" y="10" width="3" height="1" fill="#fff"/><rect x="13" y="10" width="1" height="1" fill="#808080"/><rect x="14" y="10" width="1" height="1" fill="#000"/><rect x="3" y="11" width="1" height="1" fill="#000"/><rect x="4" y="11" width="9" height="1" fill="#fff"/><rect x="13" y="11" width="1" height="1" fill="#808080"/><rect x="14" y="11" width="1" height="1" fill="#000"/><rect x="3" y="12" width="1" height="1" fill="#000"/><rect x="4" y="12" width="10" height="1" fill="#808080"/><rect x="14" y="12" width="1" height="1" fill="#000"/><rect x="3" y="13" width="12" height="1" fill="#000"/></svg><span class=t style="left:78px;top:80px;letter-spacing:-0.312px;">List1 (Denik)</span><div class=doth style="left:47px;top:104px;width:11px"></div><svg style="left:58px;top:97px" width="15" height="14" viewBox="0 0 15 14" shape-rendering="crispEdges"><rect x="3" y="0" width="9" height="1" fill="#000"/><rect x="3" y="1" width="1" height="1" fill="#000"/><rect x="4" y="1" width="7" height="1" fill="#fff"/><rect x="11" y="1" width="2" height="1" fill="#000"/><rect x="0" y="2" width="10" height="1" fill="#000"/><rect x="10" y="2" width="1" height="1" fill="#fff"/><rect x="11" y="2" width="1" height="1" fill="#000"/><rect x="12" y="2" width="1" height="1" fill="#fff"/><rect x="13" y="2" width="1" height="1" fill="#000"/><rect x="0" y="3" width="1" height="1" fill="#000"/><rect x="1" y="3" width="2" height="1" fill="#fff"/><rect x="3" y="3" width="1" height="1" fill="#000"/><rect x="4" y="3" width="2" height="1" fill="#fff"/><rect x="6" y="3" width="1" height="1" fill="#000"/><rect x="7" y="3" width="2" height="1" fill="#fff"/><rect x="9" y="3" width="1" height="1" fill="#000"/><rect x="10" y="3" width="1" height="1" fill="#fff"/><rect x="11" y="3" width="4" height="1" fill="#000"/><rect x="0" y="4" width="10" height="1" fill="#000"/><rect x="10" y="4" width="3" height="1" fill="#fff"/><rect x="13" y="4" width="1" height="1" fill="#808080"/><rect x="14" y="4" width="1" height="1" fill="#000"/><rect x="0" y="5" width="1" height="1" fill="#000"/><rect x="1" y="5" width="2" height="1" fill="#fff"/><rect x="3" y="5" width="1" height="1" fill="#000"/><rect x="4" y="5" width="2" height="1" fill="#fff"/><rect x="6" y="5" width="1" height="1" fill="#000"/><rect x="7" y="5" width="2" height="1" fill="#fff"/><rect x="9" y="5" width="1" height="1" fill="#000"/><rect x="10" y="5" width="3" height="1" fill="#fff"/><rect x="13" y="5" width="1" height="1" fill="#808080"/><rect x="14" y="5" width="1" height="1" fill="#000"/><rect x="0" y="6" width="10" height="1" fill="#000"/><rect x="10" y="6" width="3" height="1" fill="#fff"/><rect x="13" y="6" width="1" height="1" fill="#808080"/><rect x="14" y="6" width="1" height="1" fill="#000"/><rect x="0" y="7" width="1" height="1" fill="#000"/><rect x="1" y="7" width="2" height="1" fill="#fff"/><rect x="3" y="7" width="1" height="1" fill="#000"/><rect x="4" y="7" width="2" height="1" fill="#fff"/><rect x="6" y="7" width="1" height="1" fill="#000"/><rect x="7" y="7" width="2" height="1" fill="#fff"/><rect x="9" y="7" width="1" height="1" fill="#000"/><rect x="10" y="7" width="3" height="1" fill="#fff"/><rect x="13" y="7" width="1" height="1" fill="#808080"/><rect x="14" y="7" width="1" height="1" fill="#000"/><rect x="0" y="8" width="10" height="1" fill="#000"/><rect x="10" y="8" width="3" height="1" fill="#fff"/><rect x="13" y="8" width="1" height="1" fill="#808080"/><rect x="14" y="8" width="1" height="1" fill="#000"/><rect x="0" y="9" width="1" height="1" fill="#000"/><rect x="1" y="9" width="2" height="1" fill="#fff"/><rect x="3" y="9" width="1" height="1" fill="#000"/><rect x="4" y="9" width="2" height="1" fill="#fff"/><rect x="6" y="9" width="1" height="1" fill="#000"/><rect x="7" y="9" width="2" height="1" fill="#fff"/><rect x="9" y="9" width="1" height="1" fill="#000"/><rect x="10" y="9" width="3" height="1" fill="#fff"/><rect x="13" y="9" width="1" height="1" fill="#808080"/><rect x="14" y="9" width="1" height="1" fill="#000"/><rect x="0" y="10" width="10" height="1" fill="#000"/><rect x="10" y="10" width="3" height="1" fill="#fff"/><rect x="13" y="10" width="1" height="1" fill="#808080"/><rect x="14" y="10" width="1" height="1" fill="#000"/><rect x="3" y="11" width="1" height="1" fill="#000"/><rect x="4" y="11" width="9" height="1" fill="#fff"/><rect x="13" y="11" width="1" height="1" fill="#808080"/><rect x="14" y="11" width="1" height="1" fill="#000"/><rect x="3" y="12" width="1" height="1" fill="#000"/><rect x="4" y="12" width="10" height="1" fill="#808080"/><rect x="14" y="12" width="1" height="1" fill="#000"/><rect x="3" y="13" width="12" height="1" fill="#000"/></svg><span class=t style="left:78px;top:96px;letter-spacing:-0.159px;">List2 (Nastaveni)</span><div class=doth style="left:47px;top:120px;width:11px"></div><svg style="left:58px;top:113px" width="15" height="14" viewBox="0 0 15 14" shape-rendering="crispEdges"><rect x="3" y="0" width="9" height="1" fill="#000"/><rect x="3" y="1" width="1" height="1" fill="#000"/><rect x="4" y="1" width="7" height="1" fill="#fff"/><rect x="11" y="1" width="2" height="1" fill="#000"/><rect x="0" y="2" width="10" height="1" fill="#000"/><rect x="10" y="2" width="1" height="1" fill="#fff"/><rect x="11" y="2" width="1" height="1" fill="#000"/><rect x="12" y="2" width="1" height="1" fill="#fff"/><rect x="13" y="2" width="1" height="1" fill="#000"/><rect x="0" y="3" width="1" height="1" fill="#000"/><rect x="1" y="3" width="2" height="1" fill="#fff"/><rect x="3" y="3" width="1" height="1" fill="#000"/><rect x="4" y="3" width="2" height="1" fill="#fff"/><rect x="6" y="3" width="1" height="1" fill="#000"/><rect x="7" y="3" width="2" height="1" fill="#fff"/><rect x="9" y="3" width="1" height="1" fill="#000"/><rect x="10" y="3" width="1" height="1" fill="#fff"/><rect x="11" y="3" width="4" height="1" fill="#000"/><rect x="0" y="4" width="10" height="1" fill="#000"/><rect x="10" y="4" width="3" height="1" fill="#fff"/><rect x="13" y="4" width="1" height="1" fill="#808080"/><rect x="14" y="4" width="1" height="1" fill="#000"/><rect x="0" y="5" width="1" height="1" fill="#000"/><rect x="1" y="5" width="2" height="1" fill="#fff"/><rect x="3" y="5" width="1" height="1" fill="#000"/><rect x="4" y="5" width="2" height="1" fill="#fff"/><rect x="6" y="5" width="1" height="1" fill="#000"/><rect x="7" y="5" width="2" height="1" fill="#fff"/><rect x="9" y="5" width="1" height="1" fill="#000"/><rect x="10" y="5" width="3" height="1" fill="#fff"/><rect x="13" y="5" width="1" height="1" fill="#808080"/><rect x="14" y="5" width="1" height="1" fill="#000"/><rect x="0" y="6" width="10" height="1" fill="#000"/><rect x="10" y="6" width="3" height="1" fill="#fff"/><rect x="13" y="6" width="1" height="1" fill="#808080"/><rect x="14" y="6" width="1" height="1" fill="#000"/><rect x="0" y="7" width="1" height="1" fill="#000"/><rect x="1" y="7" width="2" height="1" fill="#fff"/><rect x="3" y="7" width="1" height="1" fill="#000"/><rect x="4" y="7" width="2" height="1" fill="#fff"/><rect x="6" y="7" width="1" height="1" fill="#000"/><rect x="7" y="7" width="2" height="1" fill="#fff"/><rect x="9" y="7" width="1" height="1" fill="#000"/><rect x="10" y="7" width="3" height="1" fill="#fff"/><rect x="13" y="7" width="1" height="1" fill="#808080"/><rect x="14" y="7" width="1" height="1" fill="#000"/><rect x="0" y="8" width="10" height="1" fill="#000"/><rect x="10" y="8" width="3" height="1" fill="#fff"/><rect x="13" y="8" width="1" height="1" fill="#808080"/><rect x="14" y="8" width="1" height="1" fill="#000"/><rect x="0" y="9" width="1" height="1" fill="#000"/><rect x="1" y="9" width="2" height="1" fill="#fff"/><rect x="3" y="9" width="1" height="1" fill="#000"/><rect x="4" y="9" width="2" height="1" fill="#fff"/><rect x="6" y="9" width="1" height="1" fill="#000"/><rect x="7" y="9" width="2" height="1" fill="#fff"/><rect x="9" y="9" width="1" height="1" fill="#000"/><rect x="10" y="9" width="3" height="1" fill="#fff"/><rect x="13" y="9" width="1" height="1" fill="#808080"/><rect x="14" y="9" width="1" height="1" fill="#000"/><rect x="0" y="10" width="10" height="1" fill="#000"/><rect x="10" y="10" width="3" height="1" fill="#fff"/><rect x="13" y="10" width="1" height="1" fill="#808080"/><rect x="14" y="10" width="1" height="1" fill="#000"/><rect x="3" y="11" width="1" height="1" fill="#000"/><rect x="4" y="11" width="9" height="1" fill="#fff"/><rect x="13" y="11" width="1" height="1" fill="#808080"/><rect x="14" y="11" width="1" height="1" fill="#000"/><rect x="3" y="12" width="1" height="1" fill="#000"/><rect x="4" y="12" width="10" height="1" fill="#808080"/><rect x="14" y="12" width="1" height="1" fill="#000"/><rect x="3" y="13" width="12" height="1" fill="#000"/></svg><span class=t style="left:78px;top:112px;letter-spacing:-0.521px;">List3 (MAE_MFE)</span><div class=doth style="left:47px;top:136px;width:11px"></div><svg style="left:58px;top:129px" width="15" height="14" viewBox="0 0 15 14" shape-rendering="crispEdges"><rect x="3" y="0" width="9" height="1" fill="#000"/><rect x="3" y="1" width="1" height="1" fill="#000"/><rect x="4" y="1" width="7" height="1" fill="#fff"/><rect x="11" y="1" width="2" height="1" fill="#000"/><rect x="0" y="2" width="10" height="1" fill="#000"/><rect x="10" y="2" width="1" height="1" fill="#fff"/><rect x="11" y="2" width="1" height="1" fill="#000"/><rect x="12" y="2" width="1" height="1" fill="#fff"/><rect x="13" y="2" width="1" height="1" fill="#000"/><rect x="0" y="3" width="1" height="1" fill="#000"/><rect x="1" y="3" width="2" height="1" fill="#fff"/><rect x="3" y="3" width="1" height="1" fill="#000"/><rect x="4" y="3" width="2" height="1" fill="#fff"/><rect x="6" y="3" width="1" height="1" fill="#000"/><rect x="7" y="3" width="2" height="1" fill="#fff"/><rect x="9" y="3" width="1" height="1" fill="#000"/><rect x="10" y="3" width="1" height="1" fill="#fff"/><rect x="11" y="3" width="4" height="1" fill="#000"/><rect x="0" y="4" width="10" height="1" fill="#000"/><rect x="10" y="4" width="3" height="1" fill="#fff"/><rect x="13" y="4" width="1" height="1" fill="#808080"/><rect x="14" y="4" width="1" height="1" fill="#000"/><rect x="0" y="5" width="1" height="1" fill="#000"/><rect x="1" y="5" width="2" height="1" fill="#fff"/><rect x="3" y="5" width="1" height="1" fill="#000"/><rect x="4" y="5" width="2" height="1" fill="#fff"/><rect x="6" y="5" width="1" height="1" fill="#000"/><rect x="7" y="5" width="2" height="1" fill="#fff"/><rect x="9" y="5" width="1" height="1" fill="#000"/><rect x="10" y="5" width="3" height="1" fill="#fff"/><rect x="13" y="5" width="1" height="1" fill="#808080"/><rect x="14" y="5" width="1" height="1" fill="#000"/><rect x="0" y="6" width="10" height="1" fill="#000"/><rect x="10" y="6" width="3" height="1" fill="#fff"/><rect x="13" y="6" width="1" height="1" fill="#808080"/><rect x="14" y="6" width="1" height="1" fill="#000"/><rect x="0" y="7" width="1" height="1" fill="#000"/><rect x="1" y="7" width="2" height="1" fill="#fff"/><rect x="3" y="7" width="1" height="1" fill="#000"/><rect x="4" y="7" width="2" height="1" fill="#fff"/><rect x="6" y="7" width="1" height="1" fill="#000"/><rect x="7" y="7" width="2" height="1" fill="#fff"/><rect x="9" y="7" width="1" height="1" fill="#000"/><rect x="10" y="7" width="3" height="1" fill="#fff"/><rect x="13" y="7" width="1" height="1" fill="#808080"/><rect x="14" y="7" width="1" height="1" fill="#000"/><rect x="0" y="8" width="10" height="1" fill="#000"/><rect x="10" y="8" width="3" height="1" fill="#fff"/><rect x="13" y="8" width="1" height="1" fill="#808080"/><rect x="14" y="8" width="1" height="1" fill="#000"/><rect x="0" y="9" width="1" height="1" fill="#000"/><rect x="1" y="9" width="2" height="1" fill="#fff"/><rect x="3" y="9" width="1" height="1" fill="#000"/><rect x="4" y="9" width="2" height="1" fill="#fff"/><rect x="6" y="9" width="1" height="1" fill="#000"/><rect x="7" y="9" width="2" height="1" fill="#fff"/><rect x="9" y="9" width="1" height="1" fill="#000"/><rect x="10" y="9" width="3" height="1" fill="#fff"/><rect x="13" y="9" width="1" height="1" fill="#808080"/><rect x="14" y="9" width="1" height="1" fill="#000"/><rect x="0" y="10" width="10" height="1" fill="#000"/><rect x="10" y="10" width="3" height="1" fill="#fff"/><rect x="13" y="10" width="1" height="1" fill="#808080"/><rect x="14" y="10" width="1" height="1" fill="#000"/><rect x="3" y="11" width="1" height="1" fill="#000"/><rect x="4" y="11" width="9" height="1" fill="#fff"/><rect x="13" y="11" width="1" height="1" fill="#808080"/><rect x="14" y="11" width="1" height="1" fill="#000"/><rect x="3" y="12" width="1" height="1" fill="#000"/><rect x="4" y="12" width="10" height="1" fill="#808080"/><rect x="14" y="12" width="1" height="1" fill="#000"/><rect x="3" y="13" width="12" height="1" fill="#000"/></svg><span class=t style="left:78px;top:128px;letter-spacing:-0.182px;">List4 (Vysledky)</span><div class=doth style="left:47px;top:152px;width:11px"></div><svg style="left:58px;top:145px" width="15" height="14" viewBox="0 0 15 14" shape-rendering="crispEdges"><rect x="3" y="0" width="9" height="1" fill="#000"/><rect x="3" y="1" width="1" height="1" fill="#000"/><rect x="4" y="1" width="7" height="1" fill="#fff"/><rect x="11" y="1" width="2" height="1" fill="#000"/><rect x="0" y="2" width="10" height="1" fill="#000"/><rect x="10" y="2" width="1" height="1" fill="#fff"/><rect x="11" y="2" width="1" height="1" fill="#000"/><rect x="12" y="2" width="1" height="1" fill="#fff"/><rect x="13" y="2" width="1" height="1" fill="#000"/><rect x="0" y="3" width="1" height="1" fill="#000"/><rect x="1" y="3" width="2" height="1" fill="#fff"/><rect x="3" y="3" width="1" height="1" fill="#000"/><rect x="4" y="3" width="2" height="1" fill="#fff"/><rect x="6" y="3" width="1" height="1" fill="#000"/><rect x="7" y="3" width="2" height="1" fill="#fff"/><rect x="9" y="3" width="1" height="1" fill="#000"/><rect x="10" y="3" width="1" height="1" fill="#fff"/><rect x="11" y="3" width="4" height="1" fill="#000"/><rect x="0" y="4" width="10" height="1" fill="#000"/><rect x="10" y="4" width="3" height="1" fill="#fff"/><rect x="13" y="4" width="1" height="1" fill="#808080"/><rect x="14" y="4" width="1" height="1" fill="#000"/><rect x="0" y="5" width="1" height="1" fill="#000"/><rect x="1" y="5" width="2" height="1" fill="#fff"/><rect x="3" y="5" width="1" height="1" fill="#000"/><rect x="4" y="5" width="2" height="1" fill="#fff"/><rect x="6" y="5" width="1" height="1" fill="#000"/><rect x="7" y="5" width="2" height="1" fill="#fff"/><rect x="9" y="5" width="1" height="1" fill="#000"/><rect x="10" y="5" width="3" height="1" fill="#fff"/><rect x="13" y="5" width="1" height="1" fill="#808080"/><rect x="14" y="5" width="1" height="1" fill="#000"/><rect x="0" y="6" width="10" height="1" fill="#000"/><rect x="10" y="6" width="3" height="1" fill="#fff"/><rect x="13" y="6" width="1" height="1" fill="#808080"/><rect x="14" y="6" width="1" height="1" fill="#000"/><rect x="0" y="7" width="1" height="1" fill="#000"/><rect x="1" y="7" width="2" height="1" fill="#fff"/><rect x="3" y="7" width="1" height="1" fill="#000"/><rect x="4" y="7" width="2" height="1" fill="#fff"/><rect x="6" y="7" width="1" height="1" fill="#000"/><rect x="7" y="7" width="2" height="1" fill="#fff"/><rect x="9" y="7" width="1" height="1" fill="#000"/><rect x="10" y="7" width="3" height="1" fill="#fff"/><rect x="13" y="7" width="1" height="1" fill="#808080"/><rect x="14" y="7" width="1" height="1" fill="#000"/><rect x="0" y="8" width="10" height="1" fill="#000"/><rect x="10" y="8" width="3" height="1" fill="#fff"/><rect x="13" y="8" width="1" height="1" fill="#808080"/><rect x="14" y="8" width="1" height="1" fill="#000"/><rect x="0" y="9" width="1" height="1" fill="#000"/><rect x="1" y="9" width="2" height="1" fill="#fff"/><rect x="3" y="9" width="1" height="1" fill="#000"/><rect x="4" y="9" width="2" height="1" fill="#fff"/><rect x="6" y="9" width="1" height="1" fill="#000"/><rect x="7" y="9" width="2" height="1" fill="#fff"/><rect x="9" y="9" width="1" height="1" fill="#000"/><rect x="10" y="9" width="3" height="1" fill="#fff"/><rect x="13" y="9" width="1" height="1" fill="#808080"/><rect x="14" y="9" width="1" height="1" fill="#000"/><rect x="0" y="10" width="10" height="1" fill="#000"/><rect x="10" y="10" width="3" height="1" fill="#fff"/><rect x="13" y="10" width="1" height="1" fill="#808080"/><rect x="14" y="10" width="1" height="1" fill="#000"/><rect x="3" y="11" width="1" height="1" fill="#000"/><rect x="4" y="11" width="9" height="1" fill="#fff"/><rect x="13" y="11" width="1" height="1" fill="#808080"/><rect x="14" y="11" width="1" height="1" fill="#000"/><rect x="3" y="12" width="1" height="1" fill="#000"/><rect x="4" y="12" width="10" height="1" fill="#808080"/><rect x="14" y="12" width="1" height="1" fill="#000"/><rect x="3" y="13" width="12" height="1" fill="#000"/></svg><span class=t style="left:78px;top:144px;letter-spacing:-0.303px;">List5 (Kalk1)</span><div class=doth style="left:47px;top:168px;width:11px"></div><svg style="left:58px;top:161px" width="15" height="14" viewBox="0 0 15 14" shape-rendering="crispEdges"><rect x="3" y="0" width="9" height="1" fill="#000"/><rect x="3" y="1" width="1" height="1" fill="#000"/><rect x="4" y="1" width="7" height="1" fill="#fff"/><rect x="11" y="1" width="2" height="1" fill="#000"/><rect x="0" y="2" width="10" height="1" fill="#000"/><rect x="10" y="2" width="1" height="1" fill="#fff"/><rect x="11" y="2" width="1" height="1" fill="#000"/><rect x="12" y="2" width="1" height="1" fill="#fff"/><rect x="13" y="2" width="1" height="1" fill="#000"/><rect x="0" y="3" width="1" height="1" fill="#000"/><rect x="1" y="3" width="2" height="1" fill="#fff"/><rect x="3" y="3" width="1" height="1" fill="#000"/><rect x="4" y="3" width="2" height="1" fill="#fff"/><rect x="6" y="3" width="1" height="1" fill="#000"/><rect x="7" y="3" width="2" height="1" fill="#fff"/><rect x="9" y="3" width="1" height="1" fill="#000"/><rect x="10" y="3" width="1" height="1" fill="#fff"/><rect x="11" y="3" width="4" height="1" fill="#000"/><rect x="0" y="4" width="10" height="1" fill="#000"/><rect x="10" y="4" width="3" height="1" fill="#fff"/><rect x="13" y="4" width="1" height="1" fill="#808080"/><rect x="14" y="4" width="1" height="1" fill="#000"/><rect x="0" y="5" width="1" height="1" fill="#000"/><rect x="1" y="5" width="2" height="1" fill="#fff"/><rect x="3" y="5" width="1" height="1" fill="#000"/><rect x="4" y="5" width="2" height="1" fill="#fff"/><rect x="6" y="5" width="1" height="1" fill="#000"/><rect x="7" y="5" width="2" height="1" fill="#fff"/><rect x="9" y="5" width="1" height="1" fill="#000"/><rect x="10" y="5" width="3" height="1" fill="#fff"/><rect x="13" y="5" width="1" height="1" fill="#808080"/><rect x="14" y="5" width="1" height="1" fill="#000"/><rect x="0" y="6" width="10" height="1" fill="#000"/><rect x="10" y="6" width="3" height="1" fill="#fff"/><rect x="13" y="6" width="1" height="1" fill="#808080"/><rect x="14" y="6" width="1" height="1" fill="#000"/><rect x="0" y="7" width="1" height="1" fill="#000"/><rect x="1" y="7" width="2" height="1" fill="#fff"/><rect x="3" y="7" width="1" height="1" fill="#000"/><rect x="4" y="7" width="2" height="1" fill="#fff"/><rect x="6" y="7" width="1" height="1" fill="#000"/><rect x="7" y="7" width="2" height="1" fill="#fff"/><rect x="9" y="7" width="1" height="1" fill="#000"/><rect x="10" y="7" width="3" height="1" fill="#fff"/><rect x="13" y="7" width="1" height="1" fill="#808080"/><rect x="14" y="7" width="1" height="1" fill="#000"/><rect x="0" y="8" width="10" height="1" fill="#000"/><rect x="10" y="8" width="3" height="1" fill="#fff"/><rect x="13" y="8" width="1" height="1" fill="#808080"/><rect x="14" y="8" width="1" height="1" fill="#000"/><rect x="0" y="9" width="1" height="1" fill="#000"/><rect x="1" y="9" width="2" height="1" fill="#fff"/><rect x="3" y="9" width="1" height="1" fill="#000"/><rect x="4" y="9" width="2" height="1" fill="#fff"/><rect x="6" y="9" width="1" height="1" fill="#000"/><rect x="7" y="9" width="2" height="1" fill="#fff"/><rect x="9" y="9" width="1" height="1" fill="#000"/><rect x="10" y="9" width="3" height="1" fill="#fff"/><rect x="13" y="9" width="1" height="1" fill="#808080"/><rect x="14" y="9" width="1" height="1" fill="#000"/><rect x="0" y="10" width="10" height="1" fill="#000"/><rect x="10" y="10" width="3" height="1" fill="#fff"/><rect x="13" y="10" width="1" height="1" fill="#808080"/><rect x="14" y="10" width="1" height="1" fill="#000"/><rect x="3" y="11" width="1" height="1" fill="#000"/><rect x="4" y="11" width="9" height="1" fill="#fff"/><rect x="13" y="11" width="1" height="1" fill="#808080"/><rect x="14" y="11" width="1" height="1" fill="#000"/><rect x="3" y="12" width="1" height="1" fill="#000"/><rect x="4" y="12" width="10" height="1" fill="#808080"/><rect x="14" y="12" width="1" height="1" fill="#000"/><rect x="3" y="13" width="12" height="1" fill="#000"/></svg><span class=t style="left:78px;top:160px;letter-spacing:-0.494px;">Sheet1 (MAE_MFE_Vysledky)</span><div class=doth style="left:47px;top:184px;width:11px"></div><svg style="left:57px;top:178px" width="16" height="15" viewBox="0 0 16 15" ><path d="M3.5,0.5 H11 L14.5,4 V14.5 H3.5 Z" fill="#fff" stroke="#000" stroke-width="1"/><path d="M11,0.5 V4 H14.5" fill="none" stroke="#000" stroke-width="1"/><path d="M1,4.5 L8.5,11.5 M8.5,4.5 L1,11.5" stroke="#2f8f2f" stroke-width="2.6"/><path d="M2.2,5 L8,11" stroke="#fff" stroke-width="0.8" stroke-dasharray="1,1"/></svg><span class=t style="left:78px;top:176px;letter-spacing:-0.283px;">ThisWorkbook</span><div class=doth style="left:32px;top:200px;width:6px"></div><div class="pm" style="left:23px;top:196px"></div><svg style="left:39px;top:194px" width="16" height="13" viewBox="0 0 16 13" ><defs><pattern id="yd" width="2" height="2" patternUnits="userSpaceOnUse"><rect width="2" height="2" fill="#fff"/><rect width="1" height="1" fill="#FFFF00"/><rect x="1" y="1" width="1" height="1" fill="#FFFF00"/></pattern></defs><path d="M1.5,5 V2.5 L3,0.5 H7.5 L9,2.5 H13.5 V5.5" fill="url(#yd)" stroke="#808080" stroke-width="1"/><path d="M0.5,5.5 H12.5 L13.8,11.5 H2.2 Z" fill="url(#yd)" stroke="#808080" stroke-width="1"/><path d="M12.8,5 L14.3,10.5" stroke="#000" stroke-width="1.4"/></svg><span class=t style="left:59px;top:192px;letter-spacing:-0.513px;">Modules</span><div style="left:76px;top:208px;width:44px;height:16px;background:#D4D0C8"></div><div class=doth style="left:47px;top:216px;width:11px"></div><svg style="left:57px;top:209px" width="16" height="13" viewBox="0 0 16 13" ><g stroke="#000" stroke-width="0.9" fill="none"><path d="M2,8.5 L7.5,3 M7,4 L13,11 M12.5,3 L6,8.5 M3,9 L6,8"/></g><polygon points="7.3,0.10000000000000009 9.1,2.5 7.3,4.9 5.5,2.5" fill="#F0F000"/><polygon points="12.3,0.10000000000000009 14.200000000000001,2.5 12.3,4.9 10.4,2.5" fill="#F000F0"/><polygon points="2,6.500000000000001 3.9,8.8 2,11.100000000000001 0.10000000000000009,8.8" fill="#F000F0"/><polygon points="6.3,6.6 8.7,8.2 6.3,9.799999999999999 3.9,8.2" fill="#00C000"/><polygon points="12.3,9.4 14.5,11 12.3,12.6 10.100000000000001,11" fill="#00E0E0"/></svg><span class=t style="left:78px;top:208px;letter-spacing:-0.601px;">Module1</span><div class=doth style="left:47px;top:232px;width:11px"></div><svg style="left:57px;top:225px" width="16" height="13" viewBox="0 0 16 13" ><g stroke="#000" stroke-width="0.9" fill="none"><path d="M2,8.5 L7.5,3 M7,4 L13,11 M12.5,3 L6,8.5 M3,9 L6,8"/></g><polygon points="7.3,0.10000000000000009 9.1,2.5 7.3,4.9 5.5,2.5" fill="#F0F000"/><polygon points="12.3,0.10000000000000009 14.200000000000001,2.5 12.3,4.9 10.4,2.5" fill="#F000F0"/><polygon points="2,6.500000000000001 3.9,8.8 2,11.100000000000001 0.10000000000000009,8.8" fill="#F000F0"/><polygon points="6.3,6.6 8.7,8.2 6.3,9.799999999999999 3.9,8.2" fill="#00C000"/><polygon points="12.3,9.4 14.5,11 12.3,12.6 10.100000000000001,11" fill="#00E0E0"/></svg><span class=t style="left:78px;top:224px;letter-spacing:-0.601px;">Module2</span></div><div class=trk style="left:161px;top:114px;width:16px;height:232px"></div><div class=sbtn style="left:161px;top:114px;width:16px;height:16px"></div><svg style="left:165px;top:120px" width="7" height="4"><polygon points="0,4 7,4 3.5,0" fill="#000"/></svg><div class=sbtn style="left:161px;top:130px;width:16px;height:186px"></div><div class=sbtn style="left:161px;top:330px;width:16px;height:16px"></div><svg style="left:165px;top:336px" width="7" height="4"><polygon points="0,0 7,0 3.5,4" fill="#000"/></svg><div class=trk style="left:1px;top:346px;width:160px;height:16px"></div><div class=sbtn style="left:1px;top:346px;width:16px;height:16px"></div><svg style="left:6px;top:350px" width="4" height="7"><polygon points="4,0 0,3.5 4,7" fill="#000"/></svg><div class=sbtn style="left:17px;top:346px;width:53px;height:16px"></div><div class=sbtn style="left:145px;top:346px;width:16px;height:16px"></div><svg style="left:152px;top:350px" width="4" height="7"><polygon points="0,0 4,3.5 0,7" fill="#000"/></svg><div style="left:161px;top:346px;width:16px;height:16px;background:#D4D0C8"></div><div style="left:0;top:370px;width:179px;height:15px;background:#808080"></div><span class=t style="left:0px;top:369px;font-weight:bold;color:#D4D0C8;letter-spacing:0.398px;">Properties</span><span class=t style="left:62px;top:369px;font-weight:bold;color:#D4D0C8;">-</span><span class=t style="left:69px;top:369px;font-weight:bold;color:#D4D0C8;letter-spacing:0.396px;">Module1</span><div class=btn style="left:165px;top:371px;width:13px;height:13px"></div><svg style="left:167px;top:373px" width="8" height="7"><path d="M0.5,0 L7.5,7 M7.5,0 L0.5,7" stroke="#000" stroke-width="1.6" fill="none"/></svg><div class=sunk style="left:-1px;top:389px;width:177px;height:19px"></div><div class=btn style="left:159px;top:391px;width:16px;height:15px"></div><svg style="left:165px;top:397px" width="5" height="3" viewBox="0 0 5 3" ><polygon points="0,0 5,0 2.5,3" fill="#000"/></svg><span class=t style="left:3px;top:391px;font-weight:bold;letter-spacing:0.312px;">Module1</span><span class=t style="left:56px;top:391px;letter-spacing:-0.416px;">Module</span><div style="left:-2px;top:430px;width:181px;height:350px;background:#D4D0C8;box-shadow:inset 1px 1px #fff,inset -1px -1px #404040,inset -2px -2px #808080"></div><div style="left:-2px;top:410px;width:66px;height:22px;background:#D4D0C8;box-shadow:inset 1px 1px #fff,inset -1px 0 #404040,inset -2px 0 #808080;border-radius:2px 2px 0 0"></div><div style="left:64px;top:412px;width:69px;height:18px;background:#D4D0C8;box-shadow:inset 1px 1px #fff,inset -1px 0 #404040,inset -2px 0 #808080;border-radius:2px 2px 0 0"></div><span class=t style="left:7px;top:412px;letter-spacing:-0.153px;">Alphabetic</span><span class=t style="left:69px;top:414px;letter-spacing:-0.133px;">Categorized</span><div class=sunk style="left:4px;top:433px;width:170px;height:345px"></div><div style="left:6px;top:435px;width:38px;height:15px;background:#0A246A"></div><div style="left:6px;top:450px;width:166px;height:1px;background:#D4D0C8"></div><span class=t style="left:7px;top:435px;color:#fff;letter-spacing:-0.334px;">(Name)</span><span class=t style="left:47px;top:435px;letter-spacing:-0.534px;">Module1</span><div style="left:187px;top:104px;width:1132px;height:4px;background:#D4D0C8"></div><div style="left:187px;top:105px;width:1132px;height:1px;background:#fff"></div><div style="left:187px;top:108px;width:1132px;height:18px;background:#0A246A"></div><span class=t style="left:187px;top:109px;font-weight:bold;color:#fff;letter-spacing:0.435px;">sm - Module1 (Code)</span><div class=btn style="left:1268px;top:110px;width:16px;height:14px"></div><div style="left:1272px;top:119px;width:6px;height:2px;background:#000"></div><div class=btn style="left:1284px;top:110px;width:16px;height:14px"></div><div style="left:1287px;top:112px;width:9px;height:9px;border:1px solid #000;border-top-width:2px"></div><div class=btn style="left:1302px;top:110px;width:16px;height:14px"></div><svg style="left:1306px;top:113px" width="8" height="7"><path d="M0.5,0 L7.5,7 M7.5,0 L0.5,7" stroke="#000" stroke-width="1.6" fill="none"/></svg><div style="left:187px;top:126px;width:1132px;height:27px;background:#D4D0C8"></div><div style="left:187px;top:126px;width:1132px;height:27px;overflow:hidden"><div class=sunk style="left:-40px;top:3px;width:460px;height:22px"></div><div class=btn style="left:402px;top:5px;width:16px;height:18px"></div><svg style="left:406px;top:12px" width="7" height="4"><polygon points="0,0 7,0 3.5,4" fill="#000"/></svg><div class=sunk style="left:430px;top:3px;width:692px;height:22px"></div><div class=btn style="left:1104px;top:5px;width:16px;height:18px"></div><svg style="left:1108px;top:12px" width="7" height="4"><polygon points="0,0 7,0 3.5,4" fill="#000"/></svg></div><span class=t style="left:621px;top:131px;font-weight:bold;letter-spacing:0.085px;">Spocitat</span><div style="left:187px;top:153px;width:1132px;height:1px;background:#808080"></div><div style="left:187px;top:154px;width:1132px;height:1px;background:#404040"></div><div style="left:187px;top:155px;width:1115px;height:617px;background:#fff;overflow:hidden"><div style="left:0;top:354px;width:256px;height:16px;background:#FFFF00"></div><div class="code" style="left:0;top:19px"><span class=g>íku komisi pro daný trh:</span></div><div class="code" style="left:0;top:35px">unter, MAE_MFEColCKomise) = "=VLOOKUP(" &amp; ColumnLetter(MAE_MFEColTrh) &amp; TmpRowCounter &amp; ",trhy, " &amp; NastaveniTrhyKomise &amp; ",FALSE)"</div><div class="code" style="left:0;top:51px"><span class=g>íku hodnotu bodu pro daný trh:</span></div><div class="code" style="left:0;top:67px">unter, MAE_MFEColCHodnotaBodu) = "=VLOOKUP(" &amp; ColumnLetter(MAE_MFEColTrh) &amp; TmpRowCounter &amp; ",trhy," &amp; NastaveniTrhyHodnotaBodu &amp; ",FALSE)"</div><div class="code" style="left:0;top:99px"><span class=g>ráty:</span></div><div class="code" style="left:0;top:115px">unter, MAE_MFEColPL) = "=IF(" &amp; ColumnLetter(MAE_MFEColSLPT) &amp; TmpRowCounter &amp; "=""pt"",(" &amp; ColumnLetter(MAE_MFEColPT) &amp; TmpRowCounter &amp; _</div><div class="code" style="left:0;top:131px">olCHodnotaBodu) &amp; TmpRowCounter &amp; ")*" &amp; ColumnLetter(MAE_MFEColKontraktu) &amp; TmpRowCounter &amp; "-" &amp; ColumnLetter(MAE_MFEColCKomise) &amp; TmpRowCounter &amp; ",(" &amp; _</div><div class="code" style="left:0;top:147px">ColSL) &amp; TmpRowCounter &amp; "*" &amp; ColumnLetter(MAE_MFEColCHodnotaBodu) &amp; TmpRowCounter &amp; ")*" &amp; ColumnLetter(MAE_MFEColKontraktu) &amp; TmpRowCounter &amp; "-" &amp; ColumnLetter(MAE_MFEColCKomise) &amp; TmpRowCounter &amp; "))"</div><div class="code" style="left:0;top:179px"><span class=g>ešek (roman@pesek.sk)</span></div><div class="code" style="left:0;top:211px"><span class=g>nge, Volume, EX2</span></div><div class="code" style="left:0;top:227px">unter, MAE_MFEColAtr) = DenikSheet.Cells(DenikRowCounter, DenikColAtr)</div><div class="code" style="left:0;top:243px">unter, MAE_MFEColHodLod) = DenikSheet.Cells(DenikRowCounter, DenikColHodLod)</div><div class="code" style="left:0;top:259px">unter, MAE_MFEColRange) = DenikSheet.Cells(DenikRowCounter, DenikColRange)</div><div class="code" style="left:0;top:275px">unter, MAE_MFEColVolume) = DenikSheet.Cells(DenikRowCounter, DenikColVolume)</div><div class="code" style="left:0;top:291px">unter, MAE_MFEColEx2) = DenikSheet.Cells(DenikRowCounter, DenikColEx2)</div><div class="code" style="left:0;top:339px"><span class=g> průměrného zisku a ztrátu pro zachování zpětné kompatibility s Excel 2003</span></div><div class="code hl" style="left:0;top:355px">wCounter, MAE_MFEColPL) &gt; 0 Then</div><div class="code" style="left:0;top:371px"> + MAE_MFESheet.Cells(TmpRowCounter, MAE_MFEColPL)</div><div class="code" style="left:0;top:387px">fit3 + 1</div><div class="code" style="left:0;top:419px">wCounter, MAE_MFEColPL) &lt; 0 <span class=k>Then</span></div><div class="code" style="left:0;top:435px">AE_MFESheet.Cells(TmpRowCounter, MAE_MFEColPL)</div><div class="code" style="left:0;top:451px"> + 1</div><div class="code" style="left:0;top:499px"><span class=g>deme pripravu pro vypocet drawdownu. Prvni radek se lisi, proto udelame podminku pro test prvniho radku.</span></div><div class="code" style="left:0;top:515px">Start <span class=k>Then</span></div><div class="code" style="left:0;top:531px">unter, MAE_MFEColUcet) = "=Pocatecni_stav_uctu + " &amp; ColumnLetter(MAE_MFEColPL) &amp; TmpRowCounter</div><div class="code" style="left:0;top:547px">unter, MAE_MFEColDD) = "=MIN(0," &amp; ColumnLetter(MAE_MFEColPL) &amp; TmpRowCounter &amp; ")"</div><div class="code" style="left:0;top:579px">unter, MAE_MFEColUcet) = "=" &amp; ColumnLetter(MAE_MFEColPL) &amp; TmpRowCounter &amp; "+" &amp; ColumnLetter(MAE_MFEColUcet) &amp; TmpRowCounter - 1</div><div class="code" style="left:0;top:595px">unter, MAE_MFEColDD) = "=MIN(0," &amp; ColumnLetter(MAE_MFEColPL) &amp; TmpRowCounter &amp; " + " &amp; ColumnLetter(MAE_MFEColDD) &amp; TmpRowCounter - 1 &amp; ")"</div></div><div class=trk style="left:1302px;top:155px;width:16px;height:617px"></div><div style="left:1318px;top:153px;width:1px;height:619px;background:#D4D0C8"></div><div class=sbtn style="left:1302px;top:155px;width:16px;height:7px"></div><div class=sbtn style="left:1302px;top:162px;width:16px;height:16px"></div><svg style="left:1306px;top:168px" width="7" height="4"><polygon points="0,4 7,4 3.5,0" fill="#000"/></svg><div class=sbtn style="left:1302px;top:487px;width:16px;height:49px"></div></body></html>
